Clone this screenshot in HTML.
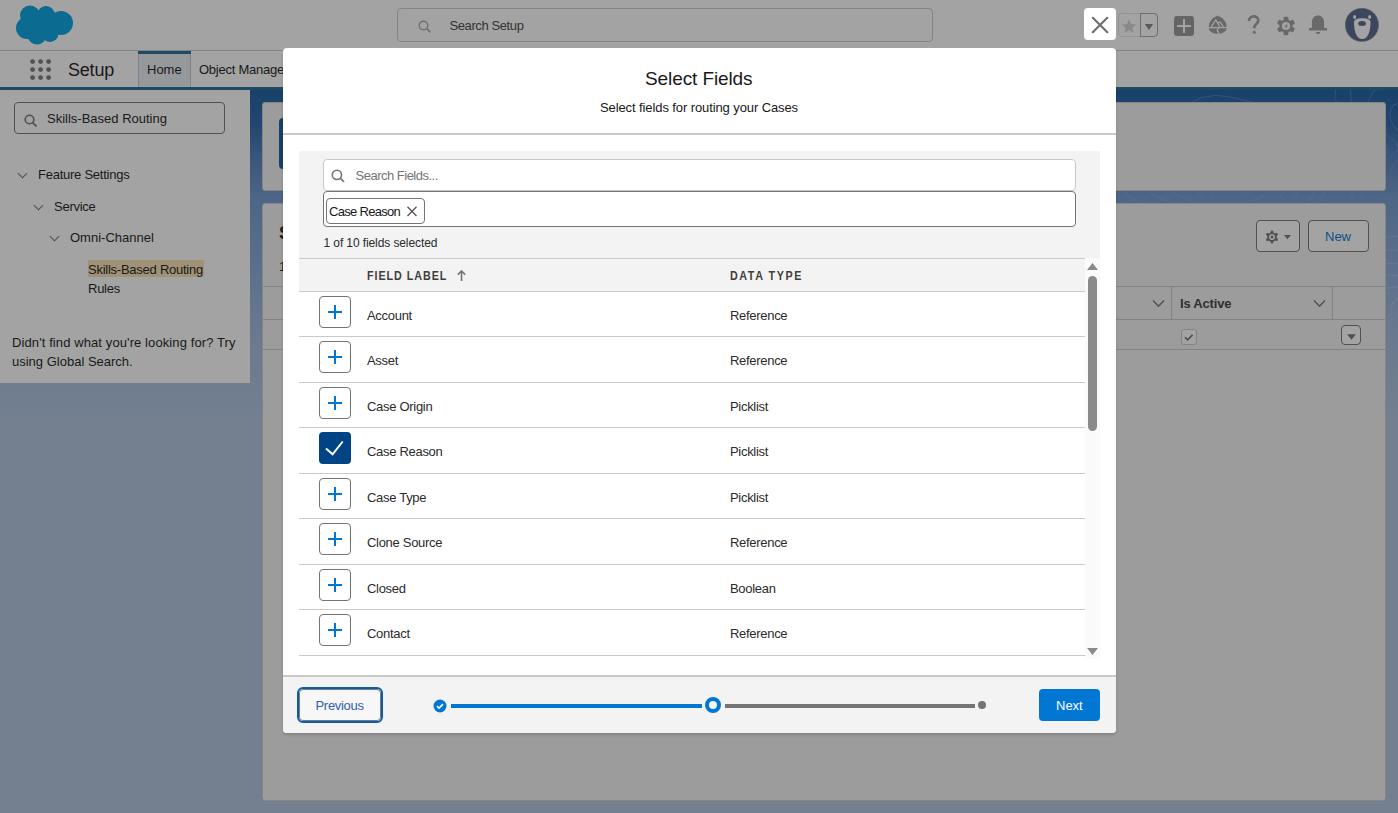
<!DOCTYPE html>
<html><head><meta charset="utf-8">
<style>
*{box-sizing:border-box;margin:0;padding:0}
html,body{width:1398px;height:813px;overflow:hidden;font-family:"Liberation Sans",sans-serif;color:#181818;background:#fff}
.a{position:absolute}
.t{position:absolute;white-space:nowrap;line-height:1}
#page{position:absolute;left:0;top:0;width:1398px;height:813px;background:linear-gradient(to bottom,#175b9e 90px,#2765a8 125px,#527fbd 160px,#6f98d0 197px,#84a7d8 260px,#9db8dd 330px,#b0c4df 420px,#b0c4df 813px)}
#topbar{left:0;top:0;width:1398px;height:51px;background:#fff;border-bottom:1px solid #c9c9c9}
#navbar{left:0;top:51px;width:1398px;height:39px;background:#fff;border-bottom:3px solid #206b95}
#sidebar{left:0;top:90px;width:250px;height:293px;background:#fff}
.card{background:#f3f3f3;border-radius:3px;border:1px solid #cfcfcf}
.sb{font-size:13px;letter-spacing:-0.25px}
#overlay{left:0;top:0;width:1398px;height:813px;background:rgba(27,27,27,0.404)}
#modal{left:283px;top:48px;width:833px;height:685px;background:#fff;border-radius:4px;box-shadow:0 2px 3px rgba(0,0,0,0.16)}
#closebtn{left:1084px;top:8px;width:32px;height:32px;background:#fff;border-radius:4px}
.rt{font-size:13px;letter-spacing:-0.3px;color:#2b2b2b}
.pbtn{left:319px;width:32px;height:32px;border:1px solid #747474;border-radius:4px;background:#fff}
.chev{position:absolute;width:7px;height:7px;border-right:1.3px solid #747474;border-bottom:1.3px solid #747474;transform:rotate(45deg)}
</style></head><body>
<div id="page">
  <div id="topbar" class="a">
    <svg class="a" style="left:16px;top:5px" width="58" height="41" viewBox="0 0 58 41"><g fill="#00a1e0"><circle cx="14" cy="10.5" r="10"/><circle cx="30" cy="10" r="9"/><circle cx="45" cy="18" r="12"/><circle cx="11" cy="23" r="11"/><circle cx="21" cy="30" r="9.5"/><circle cx="34" cy="28.5" r="8.5"/><circle cx="26" cy="19" r="12"/></g></svg>
    <div class="a" style="left:397px;top:8px;width:536px;height:34px;border:1px solid #c9c9c9;border-radius:4px"></div>
    <svg class="a" style="left:418px;top:20px" width="14" height="13" viewBox="0 0 14 13"><circle cx="5.5" cy="5.5" r="4.3" fill="none" stroke="#a8a8a8" stroke-width="1.5"/><line x1="8.6" y1="8.6" x2="12.5" y2="12.3" stroke="#a8a8a8" stroke-width="1.6"/></svg>
    <div class="t" style="left:449.5px;top:19px;font-size:13px;letter-spacing:-0.4px;color:#444">Search Setup</div>
    <!-- star group -->
    <div class="a" style="left:1118px;top:13px;width:40px;height:24px;border:1px solid #e5e5e5;border-radius:4px"></div>
    <div class="a" style="left:1140px;top:13px;width:18px;height:24px;border:1px solid #a8a8a8;border-radius:0 4px 4px 0"></div>
    <svg class="a" style="left:1121px;top:18px" width="16" height="16" viewBox="0 0 16 16"><path fill="#d4d4d4" d="M8 1.2l2.1 4.8 5.2.5-3.9 3.4 1.2 5.1L8 12.3 3.4 15l1.2-5.1L.7 6.5l5.2-.5z"/></svg>
    <svg class="a" style="left:1144px;top:24px" width="10" height="6" viewBox="0 0 10 6"><path fill="#858585" d="M.8 0h8.4L5 6z"/></svg>
    <!-- plus -->
    <div class="a" style="left:1174px;top:16px;width:20px;height:20px;background:#959595;border-radius:3px"></div>
    <div class="a" style="left:1177px;top:25px;width:14px;height:2px;background:#fff"></div>
    <div class="a" style="left:1183px;top:19px;width:2px;height:14px;background:#fff"></div>
    <!-- trailhead -->
    <svg class="a" style="left:1208px;top:15px" width="20" height="20" viewBox="0 0 20 20"><g fill="#9e9e9e"><path d="M9.6 .6Q1.2 4.2 .6 11.9H18.8Q18.2 4.2 9.6 .6z"/><path d="M.6 13.2H18.8Q18.4 17.6 9.6 19.1Q.9 17.6 .6 13.2z"/></g><g fill="none" stroke="#fff" stroke-width="1.2"><path d="M3.3 11.9L7.8 4.9 11.8 11.9"/><path d="M9.6 8.6L11.8 6.8 15.6 11.9"/><path d="M10.2 13.2L9.2 15.6 10.6 17.2 9.8 19.3"/></g></svg>
    <!-- ? -->
    <svg class="a" style="left:1247px;top:15px" width="14" height="20" viewBox="0 0 14 20"><path d="M1.9 5.9C1.9 3.1 4 1.4 6.6 1.4S11.3 3 11.3 5.6C11.3 8.6 7.3 9.2 7.3 12.1V13.2" fill="none" stroke="#9e9e9e" stroke-width="2.6"/><circle cx="7.3" cy="17.3" r="1.5" fill="#9e9e9e"/></svg>
    <!-- gear -->
    <svg class="a" style="left:1276px;top:16px" width="20" height="20" viewBox="0 0 20 20"><g fill="#9e9e9e"><circle cx="10" cy="10" r="6.6"/><g id="tooth"><rect x="7.6" y=".8" width="4.8" height="4.5" rx="1.3"/></g><rect x="7.6" y=".8" width="4.8" height="4.5" rx="1.3" transform="rotate(60 10 10)"/><rect x="7.6" y=".8" width="4.8" height="4.5" rx="1.3" transform="rotate(120 10 10)"/><rect x="7.6" y=".8" width="4.8" height="4.5" rx="1.3" transform="rotate(180 10 10)"/><rect x="7.6" y=".8" width="4.8" height="4.5" rx="1.3" transform="rotate(240 10 10)"/><rect x="7.6" y=".8" width="4.8" height="4.5" rx="1.3" transform="rotate(300 10 10)"/></g><circle cx="10" cy="10" r="4.1" fill="#fff"/><path d="M11.9 7.1L8.3 10.5H10.2L8.8 13.3 12.1 9.7H10.2z" fill="#9e9e9e"/></svg>
    <!-- bell -->
    <svg class="a" style="left:1308px;top:15px" width="20" height="20" viewBox="0 0 20 20"><g fill="#9e9e9e"><path d="M3.9 12.9V7.3C3.9 3.3 6.5.6 10 .6s6.1 2.7 6.1 6.7v5.6h2.9v2.5H1v-2.5z"/><path d="M7.8 17h4.5c0 1.3-1 2.1-2.25 2.1S7.8 18.3 7.8 17z"/></g></svg>
    <!-- avatar -->
    <svg class="a" style="left:1345px;top:8px" width="34" height="34" viewBox="0 0 34 34"><circle cx="16.9" cy="16.9" r="16.7" fill="#52668d" stroke="#9c8f86" stroke-width="0.5"/><path d="M9 14.3C9 11.4 12.2 10.2 17.2 10.2S25.5 11.4 25.5 14.3C25.5 22 23.5 31.1 17.2 31.1S9 22 9 14.3z" fill="#fff"/><ellipse cx="9.6" cy="9" rx="1.5" ry="1.9" fill="#fff"/><ellipse cx="24.6" cy="9" rx="1.5" ry="1.9" fill="#fff"/><ellipse cx="17.1" cy="15.4" rx="3.9" ry="2.5" fill="#52668d"/></svg>
  </div>
  <div id="navbar" class="a">
    <svg class="a" style="left:30px;top:8px" width="22" height="21" viewBox="0 0 22 21"><g fill="#747474"><circle cx="2.6" cy="2.6" r="2.4"/><circle cx="10.6" cy="2.6" r="2.4"/><circle cx="18.6" cy="2.6" r="2.4"/><circle cx="2.6" cy="10.6" r="2.4"/><circle cx="10.6" cy="10.6" r="2.4"/><circle cx="18.6" cy="10.6" r="2.4"/><circle cx="2.6" cy="18.6" r="2.4"/><circle cx="10.6" cy="18.6" r="2.4"/><circle cx="18.6" cy="18.6" r="2.4"/></g></svg>
    <div class="t" style="left:68px;top:9.5px;font-size:18px;letter-spacing:-0.2px;color:#181818">Setup</div>
    <div class="a" style="left:138px;top:0;width:53px;height:36px;background:#e9eef3;border-left:1px solid #c9c9c9;border-right:1px solid #c9c9c9"></div><div class="a" style="left:138px;top:0;width:53px;height:3px;background:#206b95"></div>
    <div class="t" style="left:147px;top:12px;font-size:13px;color:#181818">Home</div>
    <div class="t" style="left:199px;top:12px;font-size:13px;letter-spacing:-0.25px;color:#181818">Object Manager</div>
  </div>
  <svg class="a" style="left:250px;top:90px" width="1148" height="360" viewBox="0 0 1148 360"><defs><linearGradient id="fade" x1="0" y1="0" x2="0" y2="1"><stop offset="0" stop-color="#fff" stop-opacity="0.22"/><stop offset="0.7" stop-color="#fff" stop-opacity="0.08"/><stop offset="1" stop-color="#fff" stop-opacity="0"/></linearGradient></defs><g fill="none" stroke="url(#fade)" stroke-width="0.9"><path d="M314.8 150.0 L315.0 151.5 L314.3 153.0 L312.8 154.1 L310.8 154.8 L308.7 155.1 L306.9 155.3 L305.6 155.6 L304.6 156.2 L303.7 156.9 L302.6 157.5 L301.4 157.9 L300.0 158.0 L298.7 157.8 L297.3 157.6 L295.9 157.6 L294.1 157.9 L291.9 158.2 L289.4 158.2 L287.1 157.6 L285.6 156.4 L285.3 154.7 L286.2 152.8 L287.9 151.2 L289.8 150.0 L291.1 149.1 L291.5 148.2 L291.0 147.1 L290.2 145.6 L289.7 143.9 L290.1 142.4 L291.4 141.4 L293.3 141.1 L295.5 141.6 L297.3 142.3 L298.8 142.9 L300.0 143.1 L301.2 142.8 L302.7 142.2 L304.5 141.7 L306.3 141.6 L307.9 142.1 L309.1 143.0 L309.9 144.2 L310.6 145.3 L311.5 146.3 L312.6 147.4 L313.8 148.6Z"/><path d="M337.9 150.0 L338.1 153.9 L335.9 157.4 L331.6 160.1 L326.3 161.7 L321.2 162.5 L317.1 163.1 L314.1 164.1 L311.8 165.7 L309.5 167.7 L306.8 169.4 L303.5 170.5 L300.0 170.7 L296.5 170.4 L293.0 170.1 L289.0 170.4 L284.2 171.1 L278.3 171.7 L272.0 171.5 L266.6 169.7 L263.4 166.3 L263.3 161.7 L266.2 157.0 L270.8 153.0 L275.2 150.0 L277.9 147.8 L278.1 145.5 L276.3 142.4 L274.1 138.5 L273.1 134.1 L274.4 130.3 L278.2 128.1 L283.4 127.8 L288.8 129.1 L293.4 131.0 L297.0 132.3 L300.0 132.3 L303.2 131.1 L307.2 129.4 L311.8 128.1 L316.4 128.1 L320.4 129.5 L323.3 132.1 L325.4 135.0 L327.4 137.9 L329.7 140.5 L332.7 143.3 L335.8 146.4Z"/><path d="M353.7 150.0 L353.2 155.4 L349.4 160.2 L343.0 163.7 L335.5 165.8 L328.6 166.9 L323.4 168.0 L319.7 169.7 L316.7 172.3 L313.6 175.3 L309.7 177.9 L305.0 179.4 L300.0 179.8 L294.9 179.5 L289.8 179.4 L283.8 180.0 L276.6 181.1 L268.2 181.9 L259.5 181.1 L252.4 178.1 L248.8 172.7 L249.7 166.0 L254.3 159.4 L260.9 154.0 L266.6 150.0 L269.3 146.9 L268.6 143.5 L265.4 139.0 L262.1 133.2 L261.1 127.1 L263.7 122.1 L269.5 119.4 L277.1 119.5 L284.6 121.5 L290.9 123.9 L295.8 125.2 L300.0 124.6 L304.7 122.4 L310.5 119.7 L317.2 118.1 L323.7 118.4 L329.2 120.7 L333.2 124.4 L336.2 128.6 L339.1 132.7 L342.6 136.4 L347.0 140.3 L351.2 144.8Z"/><path d="M372.8 150.0 L371.3 157.2 L365.2 163.4 L356.1 167.9 L346.1 170.5 L337.4 172.1 L331.0 173.8 L326.6 176.7 L323.0 180.7 L318.9 185.1 L313.5 188.8 L307.0 190.9 L300.0 191.4 L292.9 191.3 L285.6 191.4 L277.1 192.5 L266.9 194.1 L255.3 194.8 L243.9 193.2 L235.2 188.2 L231.6 180.4 L234.0 171.0 L241.0 162.2 L249.6 155.1 L256.4 150.0 L258.7 145.8 L256.3 141.0 L251.3 134.5 L246.9 126.4 L246.2 118.2 L250.5 111.9 L259.1 109.0 L269.7 109.6 L279.8 112.5 L287.9 115.3 L294.2 116.3 L300.0 114.6 L306.7 111.0 L314.9 107.2 L324.1 105.2 L333.0 106.1 L340.2 109.7 L345.5 115.0 L349.5 120.8 L353.6 126.2 L358.8 131.3 L364.8 136.7 L370.1 142.9Z"/><path d="M394.3 150.0 L391.1 159.2 L382.3 167.0 L370.1 172.3 L357.4 175.5 L346.9 177.7 L339.7 180.5 L334.8 184.9 L330.6 190.8 L325.3 196.9 L318.0 201.8 L309.3 204.5 L300.0 205.3 L290.5 205.4 L280.5 206.0 L268.9 207.7 L255.2 209.7 L240.0 210.1 L225.8 207.0 L215.9 199.6 L212.9 188.7 L217.3 176.3 L227.1 165.0 L237.8 156.3 L245.1 150.0 L246.1 144.5 L241.4 137.9 L234.0 129.0 L228.6 118.3 L228.7 107.9 L235.5 100.4 L247.6 97.5 L261.6 98.8 L274.4 102.5 L284.5 105.6 L292.4 105.8 L300.0 102.5 L309.0 97.1 L320.2 92.1 L332.4 89.9 L343.8 91.7 L352.9 97.0 L359.6 104.2 L364.9 111.7 L370.6 118.7 L377.6 125.3 L385.4 132.4 L391.9 140.7Z"/><path d="M415.7 150.0 L410.2 161.2 L398.3 170.3 L383.0 176.4 L368.0 180.2 L356.3 183.2 L348.7 187.4 L343.6 193.8 L338.8 201.7 L332.2 209.7 L322.9 215.8 L311.8 219.2 L300.0 220.3 L287.9 220.7 L275.0 221.9 L260.0 224.3 L242.6 226.5 L224.0 226.2 L207.5 221.2 L196.9 210.9 L195.2 196.6 L202.2 181.2 L214.6 167.6 L226.9 157.4 L233.7 150.0 L232.6 143.2 L224.9 134.5 L215.1 123.0 L209.0 109.6 L210.5 97.2 L220.5 88.8 L236.3 86.2 L253.8 88.5 L269.2 92.8 L281.1 95.6 L290.5 94.5 L300.0 89.2 L311.7 81.8 L325.9 75.7 L341.1 73.6 L355.1 76.6 L366.0 83.8 L374.0 93.1 L380.7 102.4 L388.1 110.9 L397.1 119.0 L406.7 128.0 L413.9 138.5Z"/><path d="M425.7 150.0 L418.2 162.0 L404.2 171.5 L387.4 177.9 L371.9 182.0 L360.6 185.8 L353.6 191.2 L349.0 199.2 L344.0 208.7 L336.5 217.8 L326.0 224.6 L313.4 228.2 L300.0 229.5 L286.3 230.3 L271.4 232.0 L254.4 234.8 L234.9 236.8 L214.8 235.4 L197.8 228.6 L188.2 216.0 L188.4 199.6 L197.5 182.6 L211.2 168.3 L223.2 157.8 L228.2 150.0 L224.3 142.3 L214.0 132.3 L202.9 119.1 L197.1 104.3 L200.5 91.2 L213.1 83.1 L231.4 81.2 L250.6 84.2 L266.9 88.5 L279.2 90.4 L289.3 87.5 L300.0 80.4 L313.4 71.7 L329.5 65.2 L346.4 63.8 L361.5 68.1 L373.1 76.7 L381.7 87.2 L389.2 97.4 L397.8 106.6 L408.0 115.6 L418.2 125.6 L425.2 137.3Z"/><path d="M431.8 120.0 L430.9 121.1 L430.9 122.3 L431.8 123.8 L432.7 125.6 L433.0 127.7 L432.1 129.3 L430.2 130.3 L427.7 130.3 L425.2 129.7 L423.1 128.9 L421.5 128.6 L420.0 128.9 L418.4 129.6 L416.4 130.2 L414.4 130.4 L412.8 129.6 L411.8 128.2 L411.6 126.4 L411.7 124.9 L411.4 123.8 L409.9 123.2 L407.2 122.6 L403.8 121.6 L400.7 120.0 L399.0 117.9 L399.2 115.7 L401.4 114.1 L405.0 113.3 L408.8 113.4 L412.1 113.9 L414.3 114.2 L415.5 114.1 L416.4 113.3 L417.3 112.1 L418.5 111.1 L420.0 110.4 L421.7 110.3 L423.3 110.5 L425.0 110.7 L426.9 110.8 L429.2 110.8 L431.6 111.0 L433.9 111.8 L435.5 113.1 L435.8 115.0 L435.0 116.9 L433.4 118.6Z"/><path d="M443.3 120.0 L442.0 122.2 L442.7 124.7 L444.8 127.9 L446.6 131.8 L446.9 135.9 L444.7 139.0 L440.5 140.5 L435.3 140.3 L430.2 139.0 L426.2 137.7 L423.0 137.3 L420.0 138.2 L416.6 139.8 L412.6 141.2 L408.6 141.2 L405.4 139.5 L403.7 136.4 L403.3 132.9 L403.1 129.9 L401.8 128.1 L398.2 127.0 L392.2 125.7 L385.3 123.5 L379.4 120.0 L376.7 115.6 L378.3 111.4 L383.7 108.4 L391.3 107.2 L399.0 107.6 L405.1 108.5 L409.0 108.9 L411.1 108.1 L412.5 106.1 L414.3 103.6 L416.8 101.4 L420.0 100.1 L423.5 99.8 L426.9 100.1 L430.5 100.5 L434.6 100.6 L439.3 100.7 L444.2 101.3 L448.6 103.1 L451.3 106.1 L451.5 110.0 L449.5 113.9 L446.2 117.3Z"/><path d="M455.0 120.0 L453.9 123.4 L455.9 127.4 L459.4 132.5 L462.1 138.7 L461.9 144.7 L457.9 149.2 L450.9 151.0 L442.7 150.3 L435.2 148.2 L429.2 146.5 L424.5 146.5 L420.0 148.3 L414.7 151.1 L408.5 153.1 L402.4 152.8 L397.7 149.7 L395.2 144.8 L394.5 139.6 L393.8 135.5 L390.8 133.0 L384.2 131.4 L374.5 129.4 L363.8 125.7 L355.7 120.0 L353.1 113.2 L357.1 107.0 L366.5 103.0 L378.7 101.6 L390.2 102.4 L398.8 103.7 L403.8 103.8 L406.4 101.9 L408.2 98.2 L410.9 93.9 L414.9 90.4 L420.0 88.5 L425.5 88.2 L430.9 88.6 L436.7 89.0 L443.2 89.1 L450.5 89.4 L458.1 90.7 L464.3 93.8 L467.7 98.8 L467.4 104.9 L463.8 111.0 L458.9 116.1Z"/><path d="M467.7 120.0 L467.5 124.8 L471.2 130.6 L476.5 138.0 L479.9 146.6 L478.7 154.6 L472.2 160.2 L461.9 162.0 L450.5 160.6 L440.4 157.8 L432.5 156.0 L426.3 156.8 L420.0 160.0 L412.4 164.1 L403.8 166.6 L395.4 165.6 L389.3 160.9 L386.1 154.0 L384.9 147.0 L383.0 141.8 L377.6 138.8 L367.2 136.8 L353.0 133.8 L338.7 128.2 L329.0 120.0 L327.5 110.6 L335.1 102.5 L349.7 97.6 L366.8 96.4 L382.0 97.6 L392.6 98.9 L398.3 98.3 L401.0 94.6 L403.2 88.8 L406.9 82.4 L412.7 77.6 L420.0 75.1 L427.8 74.7 L435.6 75.3 L443.8 75.7 L453.1 75.9 L463.4 76.5 L473.6 78.7 L481.6 83.6 L485.3 91.0 L483.9 99.6 L478.5 107.9 L472.0 114.7Z"/><path d="M482.1 120.0 L483.5 126.4 L489.7 134.4 L496.9 144.5 L500.7 155.8 L497.8 165.9 L488.1 172.4 L473.8 174.0 L458.8 171.7 L446.0 168.3 L436.3 166.8 L428.4 168.9 L420.0 174.0 L409.8 179.5 L398.3 182.3 L387.5 180.3 L379.8 173.6 L375.8 164.3 L373.7 155.6 L370.0 149.5 L361.1 146.1 L346.0 143.6 L326.8 139.2 L308.9 131.3 L298.4 120.0 L299.4 107.8 L312.1 97.8 L332.8 92.2 L355.3 91.3 L374.1 92.9 L386.2 94.0 L392.0 91.9 L394.4 85.8 L396.9 77.1 L402.0 68.4 L410.1 62.1 L420.0 59.1 L430.5 58.7 L441.1 59.4 L452.3 60.0 L464.9 60.2 L478.5 61.3 L491.5 65.0 L501.0 72.2 L504.5 82.5 L501.6 94.0 L494.2 104.7 L486.4 113.3Z"/><path d="M489.8 120.0 L493.3 127.4 L501.4 136.8 L509.6 148.6 L512.9 161.2 L508.1 172.0 L495.8 178.3 L479.1 179.2 L462.3 176.4 L448.5 173.0 L438.2 172.4 L429.6 175.9 L420.0 182.5 L408.2 188.8 L395.1 191.4 L383.2 188.3 L374.9 180.1 L370.5 169.7 L367.4 160.4 L361.8 154.4 L349.9 151.1 L331.4 148.2 L309.6 142.8 L290.9 133.1 L281.8 120.0 L286.3 106.5 L303.4 96.0 L328.0 90.7 L353.0 90.2 L372.5 91.9 L383.8 92.2 L388.4 88.3 L390.0 80.1 L392.7 69.3 L398.8 59.2 L408.4 52.2 L420.0 49.2 L432.2 49.0 L444.5 49.8 L457.5 50.3 L472.0 50.7 L487.4 52.5 L501.3 57.4 L510.8 66.4 L513.4 78.5 L509.0 91.6 L500.6 103.4 L492.8 112.6Z"/><path d="M504.0 120.0 L510.4 129.2 L521.3 140.9 L530.9 155.3 L533.4 170.4 L525.8 182.4 L509.5 188.8 L488.8 189.0 L469.1 185.4 L453.5 182.2 L441.9 182.9 L431.7 188.6 L420.0 197.2 L405.5 204.7 L389.7 206.9 L375.8 202.1 L366.2 191.7 L360.8 179.4 L356.2 169.1 L347.5 162.8 L331.1 159.5 L307.5 155.8 L281.6 148.5 L261.3 136.1 L254.1 120.0 L263.4 104.1 L286.9 92.6 L317.4 87.3 L346.4 87.3 L367.3 88.9 L378.2 87.8 L381.5 81.4 L382.3 69.8 L385.5 56.0 L393.4 43.7 L405.6 35.7 L420.0 32.5 L435.0 32.5 L450.1 33.5 L466.3 34.1 L483.9 34.8 L502.2 37.6 L518.0 44.6 L527.9 56.3 L529.4 71.4 L523.2 87.1 L513.3 100.8 L505.4 111.4Z"/><path d="M1214.0 60.0 L1213.1 61.3 L1211.8 62.4 L1210.4 63.3 L1209.1 64.1 L1208.3 64.9 L1207.9 66.1 L1207.7 67.8 L1207.3 69.7 L1206.3 71.7 L1204.5 73.1 L1202.3 73.5 L1200.0 73.1 L1198.0 71.9 L1196.4 70.4 L1195.0 69.3 L1193.5 68.7 L1191.6 68.4 L1189.3 68.2 L1187.0 67.7 L1185.4 66.5 L1184.9 64.8 L1185.8 62.9 L1187.7 61.2 L1189.8 60.0 L1191.1 59.1 L1191.3 58.2 L1190.3 56.9 L1188.7 55.0 L1187.6 52.7 L1187.4 50.3 L1188.6 48.6 L1190.9 47.9 L1193.6 48.2 L1196.2 49.2 L1198.4 50.4 L1200.0 51.2 L1201.5 51.4 L1203.1 51.0 L1205.2 50.4 L1207.5 50.1 L1209.7 50.3 L1211.6 51.1 L1213.0 52.3 L1213.9 53.8 L1214.3 55.4 L1214.5 57.0 L1214.4 58.5Z"/><path d="M1230.7 60.0 L1228.7 62.9 L1225.9 65.3 L1223.0 67.3 L1220.6 69.1 L1219.2 71.3 L1218.6 74.3 L1218.3 78.3 L1217.1 82.8 L1214.6 87.0 L1210.4 89.8 L1205.2 90.5 L1200.0 89.0 L1195.5 86.1 L1192.0 83.0 L1188.9 80.7 L1185.3 79.5 L1180.8 79.2 L1175.6 78.8 L1170.6 77.3 L1167.4 74.5 L1167.0 70.5 L1169.4 66.3 L1173.7 62.7 L1177.9 60.0 L1180.1 58.0 L1179.6 55.8 L1176.7 52.6 L1173.1 48.1 L1170.7 42.7 L1171.0 37.7 L1174.3 34.2 L1179.8 33.1 L1186.1 34.2 L1191.9 36.6 L1196.4 39.1 L1200.0 40.5 L1203.4 40.4 L1207.3 39.2 L1212.0 37.8 L1217.2 37.1 L1222.2 37.8 L1226.3 39.8 L1229.1 42.8 L1230.9 46.3 L1231.8 49.9 L1232.1 53.4 L1231.8 56.8Z"/><path d="M1243.6 60.0 L1240.8 64.1 L1237.0 67.6 L1233.1 70.6 L1230.2 73.4 L1228.7 77.0 L1228.3 81.8 L1227.8 87.9 L1226.0 94.6 L1221.8 100.4 L1215.3 103.9 L1207.6 104.1 L1200.0 101.4 L1193.7 97.1 L1188.6 92.7 L1183.9 89.8 L1178.5 88.6 L1171.7 88.4 L1164.0 87.7 L1157.2 85.3 L1153.2 80.8 L1153.3 74.9 L1157.4 68.8 L1163.5 63.7 L1168.8 60.0 L1170.9 57.1 L1168.9 53.6 L1163.9 48.5 L1158.5 41.6 L1155.5 33.8 L1156.8 26.8 L1162.5 22.4 L1171.1 21.5 L1180.4 23.7 L1188.6 27.3 L1194.9 30.5 L1200.0 31.8 L1205.0 31.0 L1210.9 28.8 L1217.9 26.7 L1225.6 25.9 L1232.7 27.2 L1238.3 30.5 L1242.2 35.1 L1244.4 40.3 L1245.5 45.5 L1245.8 50.6 L1245.3 55.4Z"/><path d="M1255.9 60.0 L1252.2 65.3 L1247.6 69.8 L1243.2 73.8 L1240.2 77.9 L1238.9 83.0 L1238.8 89.8 L1238.1 98.2 L1235.2 106.9 L1229.1 114.0 L1220.1 117.7 L1209.8 117.2 L1200.0 113.1 L1191.9 107.3 L1185.4 102.0 L1179.1 98.8 L1171.7 97.7 L1162.5 97.6 L1152.5 96.6 L1144.1 93.0 L1139.8 86.7 L1140.9 78.8 L1146.7 71.0 L1154.4 64.6 L1160.1 60.0 L1161.2 56.1 L1157.1 51.2 L1149.7 44.0 L1142.7 34.6 L1139.7 24.4 L1142.6 15.9 L1151.2 11.1 L1163.1 10.8 L1175.3 14.1 L1185.6 18.8 L1193.6 22.3 L1200.0 23.2 L1206.6 21.3 L1214.6 18.0 L1224.1 15.2 L1234.2 14.5 L1243.2 16.7 L1250.1 21.4 L1254.7 27.7 L1257.2 34.6 L1258.5 41.4 L1258.8 47.9 L1258.0 54.1Z"/><path d="M1272.1 60.0 L1267.5 66.8 L1262.1 72.8 L1257.2 78.2 L1254.2 84.1 L1253.4 91.5 L1253.6 101.2 L1252.5 112.6 L1248.0 123.9 L1239.0 132.5 L1226.5 136.2 L1212.7 134.4 L1200.0 128.3 L1189.6 120.6 L1181.1 114.3 L1172.6 110.9 L1162.3 110.2 L1149.8 110.3 L1136.9 108.6 L1126.6 103.3 L1122.2 94.6 L1124.8 84.0 L1132.8 73.8 L1142.1 65.9 L1148.0 60.0 L1147.3 54.7 L1140.0 47.6 L1129.5 37.5 L1120.6 24.8 L1118.0 11.6 L1123.6 1.2 L1136.3 -3.8 L1152.6 -3.1 L1168.6 1.8 L1181.8 7.6 L1191.7 11.4 L1200.0 11.3 L1208.9 7.8 L1219.9 2.9 L1232.7 -0.7 L1245.8 -1.0 L1257.3 2.5 L1265.8 9.4 L1271.2 18.0 L1274.2 27.1 L1275.6 35.9 L1275.9 44.4 L1274.9 52.4Z"/><path d="M1283.8 60.0 L1278.8 68.0 L1273.1 75.1 L1268.4 81.8 L1266.0 89.3 L1265.9 98.9 L1266.4 111.1 L1264.7 124.8 L1258.3 137.7 L1246.7 146.8 L1231.3 149.8 L1214.8 146.5 L1200.0 138.7 L1188.1 129.8 L1178.0 123.1 L1167.6 120.1 L1154.9 120.1 L1139.9 120.3 L1124.9 117.8 L1113.8 110.9 L1110.0 100.0 L1114.3 87.3 L1123.9 75.7 L1133.7 66.7 L1138.4 60.0 L1135.0 53.4 L1124.4 44.4 L1111.4 31.8 L1101.7 16.4 L1100.5 1.3 L1109.2 -9.8 L1125.8 -14.4 L1145.7 -12.4 L1164.3 -6.2 L1179.2 0.2 L1190.3 3.4 L1200.0 1.8 L1210.9 -3.4 L1224.3 -9.7 L1239.7 -13.7 L1255.0 -13.3 L1268.0 -8.2 L1277.4 0.5 L1283.1 11.0 L1286.1 21.7 L1287.7 32.1 L1288.0 41.9 L1286.9 51.2Z"/><path d="M1292.7 60.0 L1287.7 68.9 L1282.2 76.9 L1278.2 84.9 L1276.8 94.1 L1277.5 105.7 L1278.1 120.1 L1275.4 135.6 L1267.2 149.5 L1253.0 158.4 L1234.9 160.2 L1216.3 155.2 L1200.0 146.0 L1186.9 136.4 L1175.6 130.0 L1163.5 127.8 L1148.7 128.4 L1131.5 128.6 L1115.2 125.2 L1104.1 116.6 L1101.4 103.8 L1107.1 89.6 L1117.7 77.0 L1127.1 67.4 L1129.7 60.0 L1123.1 52.2 L1109.4 41.3 L1094.4 26.4 L1085.0 8.9 L1085.9 -7.4 L1098.0 -18.4 L1118.2 -22.0 L1141.0 -18.6 L1161.5 -11.5 L1177.3 -5.1 L1189.2 -3.1 L1200.0 -6.5 L1212.6 -13.5 L1228.1 -20.8 L1245.6 -24.8 L1262.6 -23.4 L1276.5 -16.7 L1286.2 -6.3 L1291.9 5.7 L1295.0 17.8 L1296.6 29.2 L1297.1 40.0 L1296.0 50.3Z"/><path d="M1342.1 160.0 L1341.7 161.2 L1342.4 162.5 L1343.3 164.2 L1343.8 166.1 L1343.4 167.9 L1342.0 169.2 L1340.0 170.0 L1338.0 170.6 L1336.1 171.4 L1334.4 172.7 L1332.5 174.4 L1330.0 176.3 L1327.0 177.6 L1323.8 177.8 L1321.1 176.6 L1319.3 174.2 L1318.8 171.3 L1319.0 168.4 L1319.4 166.2 L1319.2 164.8 L1317.9 163.9 L1315.7 162.9 L1313.2 161.7 L1311.2 160.0 L1310.3 158.0 L1310.6 156.0 L1312.0 154.3 L1313.9 152.9 L1316.0 151.7 L1318.0 150.8 L1319.9 149.9 L1321.9 149.2 L1323.9 148.8 L1326.1 148.7 L1328.1 148.8 L1330.0 148.9 L1331.9 148.7 L1334.2 147.9 L1337.1 146.8 L1340.6 145.9 L1344.4 145.6 L1347.7 146.4 L1349.7 148.4 L1350.0 151.1 L1348.6 154.1 L1346.2 156.7 L1343.7 158.6Z"/><path d="M1348.8 160.0 L1348.9 161.9 L1350.4 164.2 L1352.1 167.0 L1352.9 170.2 L1352.0 173.0 L1349.6 175.1 L1346.4 176.4 L1343.1 177.5 L1340.2 178.9 L1337.4 181.2 L1334.1 184.2 L1330.0 187.1 L1325.1 188.8 L1320.0 188.6 L1315.9 186.2 L1313.4 182.1 L1312.8 177.3 L1313.2 172.9 L1313.5 169.7 L1312.6 167.7 L1310.0 166.4 L1306.1 164.9 L1302.0 162.8 L1298.9 160.0 L1297.7 156.7 L1298.7 153.5 L1301.1 150.8 L1304.4 148.6 L1307.7 146.9 L1310.9 145.3 L1313.9 143.8 L1317.0 142.7 L1320.3 141.9 L1323.6 141.7 L1326.9 141.8 L1330.0 141.7 L1333.3 141.0 L1337.1 139.5 L1342.0 137.7 L1347.8 136.3 L1353.7 136.2 L1358.6 138.0 L1361.3 141.6 L1361.1 146.2 L1358.4 151.0 L1354.4 155.0 L1350.8 157.9Z"/><path d="M1360.0 160.0 L1361.1 163.2 L1364.3 167.1 L1367.4 171.9 L1368.5 177.1 L1366.7 181.7 L1362.5 185.0 L1357.2 187.3 L1351.9 189.2 L1347.2 192.0 L1342.5 196.0 L1337.0 200.9 L1330.0 205.4 L1321.8 207.7 L1313.8 206.5 L1307.5 201.8 L1304.0 194.6 L1303.3 186.8 L1303.9 180.1 L1303.9 175.4 L1301.5 172.7 L1296.3 170.7 L1289.4 168.4 L1282.6 164.8 L1277.9 160.0 L1276.7 154.6 L1278.8 149.4 L1283.2 145.1 L1288.7 141.6 L1294.0 138.8 L1299.0 136.2 L1303.8 133.7 L1308.8 131.7 L1314.1 130.5 L1319.5 130.0 L1324.8 129.8 L1330.0 129.2 L1335.5 127.6 L1342.2 124.9 L1350.5 122.0 L1360.0 120.0 L1369.4 120.5 L1376.6 124.1 L1379.9 130.5 L1378.7 138.4 L1373.7 146.1 L1367.3 152.3 L1362.1 156.7Z"/><path d="M1367.1 160.0 L1369.8 164.0 L1374.6 169.2 L1378.7 175.5 L1379.8 182.1 L1377.1 187.8 L1371.5 191.9 L1364.7 194.8 L1358.2 197.5 L1352.3 201.4 L1346.3 206.8 L1339.1 213.0 L1330.0 218.1 L1319.7 220.1 L1309.9 217.6 L1302.6 210.9 L1298.9 201.5 L1298.2 191.8 L1298.7 184.0 L1297.9 179.0 L1293.8 176.1 L1286.3 173.9 L1277.0 170.9 L1268.5 166.2 L1263.3 160.0 L1262.6 153.2 L1265.9 146.8 L1272.0 141.5 L1278.8 137.3 L1285.4 133.7 L1291.4 130.3 L1297.3 127.2 L1303.4 124.6 L1310.0 122.9 L1316.8 122.0 L1323.4 121.4 L1330.0 120.2 L1337.2 117.7 L1346.0 114.0 L1356.7 110.3 L1368.7 108.5 L1379.9 109.9 L1388.0 115.4 L1390.8 124.1 L1388.1 134.2 L1381.4 143.6 L1373.8 151.0 L1368.4 156.1Z"/><path d="M1379.8 160.0 L1385.2 165.6 L1392.5 172.9 L1398.0 181.7 L1398.9 190.6 L1394.6 198.1 L1386.6 203.5 L1377.4 207.5 L1368.7 211.6 L1360.9 217.3 L1352.6 225.0 L1342.5 233.2 L1330.0 239.4 L1316.2 240.8 L1303.5 236.1 L1294.5 226.0 L1290.2 213.0 L1289.6 200.5 L1289.7 191.0 L1287.2 185.2 L1280.2 182.1 L1268.9 179.5 L1255.8 175.3 L1244.8 168.6 L1238.7 160.0 L1238.9 150.8 L1244.4 142.4 L1252.9 135.4 L1262.2 129.9 L1270.8 125.0 L1278.5 120.4 L1286.1 116.0 L1294.2 112.3 L1303.0 109.8 L1312.0 108.3 L1320.9 107.0 L1330.0 104.7 L1340.2 100.7 L1352.5 95.5 L1367.2 90.9 L1383.1 89.2 L1397.4 92.5 L1406.7 101.0 L1408.9 113.4 L1404.0 127.1 L1394.6 139.4 L1385.1 148.6 L1379.5 155.0Z"/><path d="M1390.5 160.0 L1398.9 167.0 L1408.6 176.2 L1415.0 187.1 L1415.2 197.8 L1409.2 206.7 L1399.1 213.1 L1387.9 218.1 L1377.7 223.5 L1368.2 231.0 L1358.1 240.5 L1345.4 250.1 L1330.0 256.4 L1313.5 256.5 L1298.9 249.3 L1289.0 236.1 L1284.6 220.4 L1283.9 206.2 L1283.2 196.0 L1278.6 190.3 L1268.3 187.4 L1253.3 184.4 L1237.3 179.1 L1224.6 170.7 L1218.6 160.0 L1220.3 148.9 L1227.9 139.0 L1238.6 130.9 L1249.6 124.3 L1259.5 118.4 L1268.4 112.6 L1277.2 107.1 L1286.8 102.5 L1297.3 99.2 L1308.1 97.0 L1318.8 94.8 L1330.0 91.2 L1342.7 85.8 L1358.1 79.4 L1376.1 74.4 L1394.8 73.6 L1410.8 79.0 L1420.2 90.6 L1420.9 106.3 L1413.7 122.8 L1402.5 136.9 L1392.3 147.2 L1387.8 154.2Z"/><path d="M1401.0 160.0 L1412.4 168.3 L1424.1 179.4 L1431.0 192.2 L1430.2 204.5 L1422.2 214.4 L1410.2 221.7 L1397.4 227.5 L1385.8 234.3 L1375.0 243.5 L1363.0 254.6 L1348.0 265.0 L1330.0 270.8 L1311.3 269.1 L1295.5 259.1 L1285.2 243.2 L1280.9 225.4 L1279.9 210.2 L1277.8 200.2 L1270.6 195.1 L1256.8 192.5 L1238.4 189.2 L1219.9 182.7 L1206.3 172.5 L1201.2 160.0 L1204.7 147.3 L1214.5 136.2 L1227.0 127.2 L1239.3 119.7 L1250.0 112.8 L1259.7 105.9 L1269.5 99.3 L1280.3 93.8 L1292.2 89.7 L1304.5 86.7 L1316.9 83.4 L1330.0 78.5 L1345.1 71.7 L1363.3 64.5 L1384.0 59.6 L1404.9 60.3 L1421.6 68.2 L1430.2 82.9 L1429.0 101.5 L1419.8 120.1 L1407.2 135.4 L1397.5 146.1 L1395.0 153.4Z"/><path d="M1401.1 300.0 L1400.1 301.0 L1400.8 302.2 L1402.6 304.0 L1404.5 306.5 L1405.5 309.1 L1404.8 311.4 L1402.5 312.6 L1399.3 312.4 L1396.1 311.4 L1393.5 310.1 L1391.6 309.5 L1390.0 309.9 L1388.1 311.3 L1385.5 312.8 L1382.6 313.7 L1380.0 313.4 L1378.3 311.7 L1378.1 309.2 L1379.0 306.5 L1380.5 304.2 L1381.5 302.7 L1381.5 301.7 L1380.4 301.0 L1378.5 300.0 L1376.5 298.6 L1375.1 296.9 L1374.5 295.1 L1374.7 293.2 L1375.5 291.4 L1376.5 289.7 L1378.0 287.9 L1379.8 286.4 L1382.2 285.5 L1384.9 285.4 L1387.7 286.5 L1390.0 288.3 L1391.6 290.5 L1392.7 292.3 L1393.7 293.1 L1395.3 292.9 L1397.9 292.1 L1401.1 291.5 L1404.2 291.6 L1406.3 292.7 L1406.8 294.7 L1405.5 296.8 L1403.2 298.7Z"/><path d="M1412.8 300.0 L1411.7 302.2 L1414.0 304.9 L1418.2 309.0 L1422.2 314.3 L1423.7 319.9 L1421.5 324.2 L1416.1 326.1 L1409.1 325.4 L1402.4 323.0 L1397.2 320.6 L1393.4 319.9 L1390.0 321.3 L1385.8 324.5 L1380.4 327.6 L1374.3 329.1 L1369.1 327.8 L1366.2 323.9 L1366.1 318.4 L1368.3 312.8 L1371.1 308.4 L1372.7 305.5 L1371.9 303.7 L1368.7 302.2 L1364.1 300.0 L1359.8 296.9 L1357.0 293.2 L1356.0 289.2 L1356.8 285.3 L1358.6 281.5 L1361.2 277.8 L1364.4 274.3 L1368.6 271.4 L1373.8 269.9 L1379.6 270.3 L1385.4 272.8 L1390.0 276.9 L1393.2 281.2 L1395.5 284.3 L1397.9 285.4 L1401.7 284.4 L1407.4 282.6 L1414.3 281.3 L1420.6 281.9 L1424.5 284.7 L1424.7 289.0 L1421.5 293.5 L1416.7 297.3Z"/><path d="M1420.1 300.0 L1419.9 303.0 L1423.9 307.0 L1430.0 312.7 L1435.0 320.0 L1436.1 327.2 L1432.1 332.4 L1424.1 334.2 L1414.6 332.7 L1405.9 329.5 L1399.3 326.7 L1394.5 326.4 L1390.0 329.1 L1384.2 333.6 L1376.9 337.7 L1369.0 339.0 L1362.6 336.6 L1359.4 330.7 L1359.9 323.1 L1363.0 315.9 L1366.3 310.5 L1367.4 307.2 L1365.1 305.1 L1359.8 303.1 L1353.2 300.0 L1347.4 295.7 L1343.9 290.5 L1343.1 285.1 L1344.6 279.8 L1347.4 274.9 L1351.1 270.1 L1355.7 265.6 L1361.6 262.2 L1368.8 260.7 L1376.7 261.8 L1384.1 265.6 L1390.0 271.1 L1394.0 276.4 L1397.0 279.8 L1400.6 280.2 L1406.3 278.3 L1414.4 275.6 L1423.6 274.1 L1431.6 275.4 L1435.9 279.6 L1435.2 285.6 L1430.5 291.7 L1424.4 296.5Z"/><path d="M1434.2 300.0 L1435.7 304.6 L1443.0 310.9 L1452.4 319.9 L1459.1 330.7 L1459.2 340.9 L1451.9 347.6 L1439.1 349.3 L1424.8 346.4 L1412.4 341.6 L1403.4 338.4 L1396.7 339.1 L1390.0 344.0 L1381.3 351.0 L1370.3 356.5 L1359.0 357.5 L1350.4 352.8 L1346.7 343.4 L1348.2 332.1 L1352.7 322.0 L1356.6 314.8 L1356.7 310.6 L1351.6 307.9 L1342.5 304.8 L1332.2 300.0 L1323.7 293.3 L1319.2 285.4 L1318.8 277.3 L1321.6 269.6 L1326.3 262.4 L1332.3 255.6 L1339.6 249.5 L1348.7 245.0 L1359.6 243.6 L1371.2 246.1 L1381.8 252.2 L1390.0 260.1 L1395.6 267.1 L1400.2 270.7 L1406.1 270.1 L1415.2 266.4 L1427.7 262.2 L1441.2 260.6 L1452.2 263.3 L1457.1 270.2 L1454.9 279.3 L1447.5 288.2 L1439.0 295.0Z"/><path d="M1445.0 300.0 L1449.1 306.0 L1459.5 314.3 L1471.3 325.9 L1478.4 339.3 L1476.7 351.2 L1465.8 358.3 L1449.0 359.1 L1431.3 355.0 L1416.6 349.4 L1406.2 346.4 L1398.3 348.7 L1390.0 355.9 L1378.9 364.7 L1365.3 370.8 L1351.9 370.8 L1342.3 363.5 L1339.0 351.2 L1341.5 337.3 L1346.7 325.5 L1350.1 317.7 L1348.2 313.3 L1339.8 310.3 L1327.1 306.4 L1313.9 300.0 L1303.9 291.3 L1299.2 281.3 L1299.8 271.2 L1304.1 261.8 L1310.6 253.1 L1318.5 245.0 L1328.1 238.0 L1339.9 233.3 L1353.7 232.5 L1367.9 236.5 L1380.5 244.4 L1390.0 253.7 L1396.6 261.2 L1402.5 264.0 L1410.6 261.7 L1422.9 256.2 L1438.8 251.0 L1455.3 249.8 L1467.6 254.2 L1472.1 263.5 L1468.0 275.1 L1458.5 285.9 L1449.0 294.0Z"/><path d="M1458.9 300.0 L1466.4 307.7 L1480.7 318.7 L1494.9 333.4 L1501.9 349.7 L1497.3 363.3 L1481.8 370.6 L1460.1 370.3 L1438.5 364.6 L1421.4 358.3 L1409.6 356.2 L1400.4 360.8 L1390.0 370.7 L1376.0 381.6 L1359.3 388.0 L1343.6 386.2 L1333.1 375.8 L1330.3 359.9 L1333.9 343.1 L1339.7 329.7 L1341.9 321.4 L1336.9 316.9 L1324.2 313.6 L1307.1 308.4 L1290.6 300.0 L1279.1 288.8 L1274.6 276.2 L1276.7 263.9 L1283.1 252.5 L1291.9 242.1 L1302.3 232.6 L1314.8 224.6 L1329.9 219.9 L1347.0 220.1 L1364.2 225.9 L1379.0 235.7 L1390.0 246.4 L1397.9 253.9 L1405.6 255.3 L1416.5 250.8 L1432.7 243.1 L1452.8 237.0 L1472.5 236.6 L1486.0 243.3 L1489.5 255.8 L1483.1 270.3 L1471.3 283.2 L1461.2 292.8Z"/><path d="M1471.0 300.0 L1482.3 309.3 L1499.9 322.7 L1515.5 340.0 L1521.1 358.2 L1512.9 372.6 L1492.9 379.2 L1467.2 377.4 L1443.0 370.6 L1424.6 364.3 L1412.2 363.8 L1402.1 370.9 L1390.0 383.4 L1373.6 395.6 L1354.7 401.5 L1337.6 397.4 L1327.1 383.8 L1325.2 365.0 L1329.6 346.4 L1334.9 332.5 L1335.0 324.4 L1326.3 320.3 L1309.2 316.6 L1288.4 310.3 L1269.6 300.0 L1257.6 286.6 L1254.2 272.0 L1258.1 258.0 L1266.7 245.2 L1277.6 233.7 L1290.4 223.3 L1305.4 215.1 L1323.1 210.9 L1342.8 212.3 L1362.0 219.7 L1378.2 230.9 L1390.0 241.9 L1398.8 248.4 L1408.2 247.7 L1422.0 240.6 L1441.6 231.2 L1465.0 224.8 L1486.6 225.7 L1500.1 235.0 L1501.8 250.3 L1493.2 267.1 L1480.1 281.4 L1470.6 291.8Z"/><path d="M289.8 330.0 L289.4 332.0 L288.4 333.8 L286.9 335.4 L284.9 336.6 L282.8 337.5 L280.8 338.3 L279.1 339.1 L277.6 340.1 L276.0 341.1 L274.2 342.1 L272.2 342.7 L270.0 343.0 L267.8 342.8 L265.7 342.3 L263.6 341.8 L261.5 341.4 L259.1 340.9 L256.6 340.3 L254.2 339.4 L252.3 337.9 L251.3 336.0 L251.3 333.9 L252.0 331.8 L253.0 330.0 L253.7 328.4 L253.8 326.7 L253.5 324.7 L253.1 322.5 L253.4 320.2 L254.8 318.3 L257.3 317.2 L260.4 317.3 L263.7 318.2 L266.4 319.7 L268.5 321.0 L270.0 321.6 L271.5 321.3 L273.4 320.2 L276.0 318.9 L279.1 317.9 L282.2 317.7 L285.0 318.5 L287.1 319.9 L288.4 321.8 L289.1 323.9 L289.5 326.0 L289.8 328.0Z"/><path d="M301.2 330.0 L300.5 333.1 L298.9 335.9 L296.3 338.4 L293.2 340.3 L289.9 341.8 L287.0 343.1 L284.5 344.5 L282.1 346.1 L279.7 347.9 L276.8 349.5 L273.5 350.6 L270.0 350.9 L266.5 350.6 L263.1 349.9 L259.7 349.2 L256.1 348.5 L252.2 347.8 L248.1 346.8 L244.3 345.1 L241.6 342.6 L240.3 339.5 L240.5 336.1 L241.7 332.9 L243.2 330.0 L244.0 327.4 L243.9 324.6 L243.2 321.4 L242.7 317.9 L243.4 314.3 L246.0 311.5 L250.2 310.1 L255.3 310.4 L260.4 312.1 L264.6 314.4 L267.6 316.1 L270.0 316.5 L272.5 315.4 L275.8 313.4 L280.1 311.2 L285.2 309.7 L290.2 309.7 L294.5 311.2 L297.6 313.7 L299.4 316.9 L300.4 320.3 L301.0 323.6 L301.3 326.8Z"/><path d="M318.8 330.0 L317.4 334.8 L314.7 339.2 L310.6 342.9 L305.7 345.9 L300.9 348.2 L296.6 350.4 L292.8 352.9 L289.3 355.7 L285.5 358.7 L280.9 361.3 L275.6 362.9 L270.0 363.4 L264.4 362.9 L258.9 361.9 L253.4 360.8 L247.6 359.9 L241.2 358.8 L234.8 357.1 L229.0 354.2 L225.0 350.0 L223.3 344.9 L224.0 339.5 L226.0 334.5 L228.0 330.0 L228.8 325.8 L228.2 321.4 L226.9 316.3 L226.3 310.6 L228.0 305.2 L232.5 301.2 L239.6 299.5 L247.8 300.4 L255.6 303.2 L261.8 306.4 L266.3 308.4 L270.0 308.2 L274.1 305.8 L279.7 302.1 L287.0 298.5 L295.1 296.5 L303.0 296.9 L309.4 299.7 L313.9 304.1 L316.4 309.4 L317.8 314.8 L318.6 320.0 L319.0 325.0Z"/><path d="M335.8 330.0 L333.8 336.5 L329.8 342.3 L324.2 347.3 L317.8 351.2 L311.5 354.5 L306.1 357.8 L301.4 361.5 L296.8 365.7 L291.5 370.0 L285.2 373.5 L277.8 375.7 L270.0 376.3 L262.2 375.6 L254.6 374.3 L246.9 373.0 L238.6 371.8 L229.8 370.3 L221.0 367.7 L213.4 363.4 L208.4 357.3 L206.7 350.2 L207.9 342.8 L210.6 336.0 L212.9 330.0 L213.4 324.3 L212.0 318.0 L210.0 310.9 L209.6 303.2 L212.5 296.1 L219.5 291.1 L229.6 289.5 L240.9 291.2 L251.2 295.0 L259.2 298.9 L265.0 300.6 L270.0 299.2 L276.0 294.9 L284.2 289.3 L294.5 284.4 L305.9 282.2 L316.4 283.4 L324.8 287.9 L330.2 294.4 L333.3 301.9 L334.9 309.3 L335.9 316.4 L336.3 323.3Z"/><path d="M355.0 330.0 L352.1 338.3 L346.7 345.8 L339.4 352.1 L331.3 357.2 L323.7 361.7 L317.2 366.3 L311.5 371.6 L305.6 377.5 L298.7 383.3 L290.2 388.0 L280.4 390.8 L270.0 391.4 L259.7 390.5 L249.5 388.9 L239.1 387.4 L228.0 386.0 L216.3 383.9 L204.8 380.1 L195.4 374.0 L189.6 365.7 L188.1 356.1 L190.0 346.5 L193.2 337.8 L195.5 330.0 L195.3 322.4 L192.9 314.1 L190.3 304.6 L190.3 294.6 L195.0 285.7 L205.1 280.0 L218.8 278.7 L233.5 281.4 L246.4 286.2 L256.2 290.3 L263.4 291.2 L270.0 287.9 L278.4 281.1 L289.8 273.2 L303.9 267.1 L318.8 264.9 L332.3 267.6 L342.5 274.3 L348.9 283.4 L352.4 293.4 L354.2 303.2 L355.2 312.4 L355.7 321.3Z"/><path d="M363.0 330.0 L359.6 339.1 L353.5 347.2 L345.6 354.1 L337.0 359.8 L329.2 365.0 L322.6 370.5 L316.8 376.9 L310.4 383.9 L302.6 390.6 L292.9 395.8 L281.7 398.6 L270.0 399.2 L258.3 398.2 L246.8 396.6 L234.9 395.1 L222.3 393.6 L209.1 391.0 L196.6 386.4 L186.8 379.1 L181.1 369.5 L180.1 358.7 L182.4 348.1 L185.7 338.5 L187.3 330.0 L186.2 321.5 L182.9 312.0 L180.1 301.3 L180.8 290.4 L187.2 281.1 L199.3 275.6 L215.1 274.9 L231.2 278.2 L244.8 283.2 L254.9 286.6 L262.5 286.0 L270.0 280.6 L279.9 271.9 L293.4 262.8 L309.6 256.5 L326.2 255.2 L340.6 259.2 L351.1 267.6 L357.4 278.4 L360.7 289.7 L362.4 300.6 L363.5 310.7 L364.0 320.5Z"/><path d="M379.7 330.0 L375.4 340.7 L368.1 350.2 L358.9 358.3 L349.3 365.2 L340.8 371.8 L333.7 379.0 L327.1 387.2 L319.6 396.1 L310.0 404.3 L298.0 410.4 L284.3 413.7 L270.0 414.2 L255.8 413.0 L241.7 411.2 L227.1 409.6 L211.6 407.8 L195.8 404.4 L181.2 398.3 L170.1 389.0 L164.2 377.0 L163.7 363.9 L166.6 351.3 L169.9 340.1 L170.8 330.0 L168.3 319.7 L163.9 308.1 L160.8 295.2 L162.7 282.3 L171.7 272.0 L187.2 266.3 L206.5 266.3 L225.3 270.5 L240.7 275.6 L251.9 278.1 L260.6 275.4 L270.0 267.1 L282.7 255.6 L299.8 244.6 L319.6 237.9 L339.3 237.6 L355.8 243.9 L367.4 255.1 L374.0 268.6 L377.4 282.3 L379.2 295.2 L380.5 307.2 L381.0 318.8Z"/><path d="M1172.5 230.0 L1175.9 231.6 L1179.3 234.0 L1181.4 236.8 L1181.3 239.4 L1178.9 241.1 L1175.1 241.6 L1171.1 241.2 L1167.8 240.5 L1165.5 240.3 L1163.9 241.1 L1162.2 242.7 L1160.0 244.5 L1157.3 245.8 L1154.4 246.1 L1151.7 245.3 L1149.6 243.9 L1147.7 242.3 L1145.8 240.9 L1143.7 239.6 L1141.2 238.3 L1139.1 236.7 L1137.9 234.6 L1138.2 232.2 L1140.1 230.0 L1142.8 228.3 L1145.5 227.0 L1147.4 226.0 L1148.2 224.7 L1148.1 223.0 L1148.0 220.7 L1148.5 218.5 L1150.0 216.7 L1152.4 215.9 L1155.1 215.9 L1157.7 216.4 L1160.0 216.5 L1162.4 215.9 L1165.3 214.7 L1169.0 213.3 L1173.0 212.7 L1176.5 213.4 L1178.5 215.8 L1178.3 219.2 L1176.3 222.8 L1173.4 225.7 L1171.1 227.7 L1170.7 228.9Z"/><path d="M1179.7 230.0 L1185.1 232.5 L1190.1 236.2 L1192.7 240.4 L1191.7 244.1 L1187.6 246.3 L1181.7 246.7 L1175.9 245.9 L1171.3 245.1 L1168.2 245.2 L1165.9 246.8 L1163.3 249.5 L1160.0 252.2 L1155.9 254.0 L1151.6 254.2 L1147.7 252.8 L1144.5 250.6 L1141.8 248.3 L1138.9 246.2 L1135.6 244.4 L1132.0 242.4 L1129.1 239.9 L1127.7 236.7 L1128.6 233.2 L1131.6 230.0 L1135.6 227.5 L1139.3 225.7 L1141.6 224.1 L1142.2 222.1 L1141.8 219.2 L1141.5 215.8 L1142.4 212.4 L1144.9 209.9 L1148.6 208.9 L1152.7 209.0 L1156.5 209.6 L1160.0 209.6 L1163.7 208.4 L1168.2 206.4 L1173.7 204.5 L1179.5 204.0 L1184.3 205.6 L1186.6 209.5 L1185.8 214.8 L1182.5 220.0 L1178.4 224.1 L1175.8 226.7 L1176.1 228.4Z"/><path d="M1192.5 230.0 L1201.4 234.2 L1208.9 240.1 L1211.9 246.5 L1209.3 251.9 L1202.0 254.8 L1192.6 255.1 L1183.8 253.8 L1177.2 252.9 L1172.8 253.7 L1169.3 256.8 L1165.4 261.4 L1160.0 265.6 L1153.5 268.1 L1146.8 267.9 L1140.9 265.5 L1136.0 262.0 L1131.7 258.4 L1127.1 255.3 L1121.9 252.5 L1116.5 249.3 L1112.3 245.2 L1110.8 240.1 L1112.8 234.8 L1117.8 230.0 L1123.8 226.3 L1128.9 223.6 L1131.6 220.9 L1131.7 217.4 L1130.6 212.7 L1130.2 207.1 L1132.0 201.9 L1136.3 198.4 L1142.2 197.0 L1148.6 197.3 L1154.5 197.9 L1160.0 197.5 L1165.9 195.4 L1173.2 192.2 L1181.8 189.5 L1190.5 189.3 L1197.2 192.7 L1199.8 199.4 L1197.7 207.7 L1192.3 215.6 L1186.6 221.5 L1183.7 225.1 L1185.8 227.4Z"/><path d="M1207.2 230.0 L1219.7 236.0 L1229.2 244.3 L1231.9 252.9 L1226.7 259.6 L1215.8 262.9 L1202.8 262.9 L1191.2 261.3 L1183.0 260.6 L1177.6 262.7 L1173.1 267.7 L1167.6 274.3 L1160.0 280.0 L1151.0 282.8 L1141.9 282.0 L1134.0 278.3 L1127.5 273.3 L1121.6 268.5 L1115.2 264.5 L1108.0 260.7 L1100.8 256.3 L1095.7 250.5 L1094.5 243.5 L1098.0 236.3 L1105.0 230.0 L1112.8 225.2 L1118.8 221.5 L1121.2 217.6 L1120.4 212.4 L1118.5 205.5 L1118.0 197.7 L1120.9 190.8 L1127.2 186.4 L1135.7 184.8 L1144.4 185.3 L1152.4 185.9 L1160.0 184.8 L1168.3 181.4 L1178.5 177.0 L1190.2 173.9 L1201.5 174.6 L1209.5 180.3 L1211.8 190.1 L1208.1 201.6 L1200.6 212.0 L1193.8 219.2 L1191.7 223.5 L1196.6 226.3Z"/><path d="M1223.5 230.0 L1239.4 238.0 L1250.1 248.6 L1251.5 259.1 L1243.1 266.9 L1228.2 270.3 L1211.8 269.8 L1198.0 268.1 L1188.6 268.1 L1182.5 271.9 L1177.1 279.2 L1169.9 287.8 L1160.0 294.7 L1148.4 297.5 L1137.1 295.7 L1127.4 290.6 L1119.3 284.2 L1111.8 278.3 L1103.6 273.4 L1094.5 268.7 L1085.8 262.9 L1080.2 255.4 L1079.7 246.5 L1084.9 237.6 L1093.8 230.0 L1102.9 224.2 L1109.0 219.5 L1110.5 214.2 L1108.4 207.1 L1105.6 197.9 L1105.4 188.0 L1109.7 179.6 L1118.3 174.5 L1129.3 172.9 L1140.3 173.6 L1150.4 173.8 L1160.0 171.8 L1170.8 167.1 L1183.8 161.6 L1198.4 158.6 L1211.9 160.8 L1220.6 169.3 L1221.9 182.3 L1216.3 196.8 L1207.2 209.0 L1200.2 217.2 L1200.0 221.7 L1208.6 225.1Z"/><path d="M1243.6 230.0 L1262.9 240.4 L1274.2 253.5 L1273.3 266.1 L1260.7 274.7 L1241.3 278.0 L1221.3 277.2 L1205.4 275.5 L1195.1 276.8 L1188.4 282.8 L1181.9 292.8 L1172.6 303.6 L1160.0 311.6 L1145.6 314.1 L1131.8 311.0 L1120.1 304.1 L1110.4 296.1 L1101.0 289.1 L1090.7 283.3 L1079.4 277.6 L1069.3 270.3 L1063.4 260.8 L1064.0 249.8 L1071.1 239.0 L1081.9 230.0 L1092.0 223.1 L1097.7 217.2 L1097.7 210.2 L1093.9 200.7 L1090.2 188.8 L1090.6 176.6 L1096.8 166.7 L1108.2 161.0 L1122.1 159.6 L1135.7 160.3 L1148.0 160.0 L1160.0 156.7 L1173.6 150.5 L1189.9 144.1 L1207.6 141.6 L1223.1 146.0 L1232.0 157.8 L1232.0 174.6 L1224.3 192.1 L1213.8 206.1 L1207.4 214.9 L1210.3 219.6 L1223.6 223.6Z"/><path d="M1264.8 230.0 L1286.7 242.8 L1297.4 258.3 L1293.2 272.4 L1276.1 281.5 L1252.3 284.5 L1229.3 283.3 L1212.1 282.2 L1201.4 285.2 L1194.4 293.9 L1186.7 306.6 L1175.3 319.5 L1160.0 328.0 L1142.9 329.7 L1126.9 324.9 L1113.5 316.3 L1102.2 307.0 L1091.1 299.1 L1078.7 292.5 L1065.5 285.8 L1054.3 276.9 L1048.6 265.5 L1050.6 252.5 L1059.6 240.2 L1071.8 230.0 L1082.1 222.1 L1086.6 214.9 L1084.6 206.0 L1079.0 194.0 L1074.6 179.6 L1075.9 165.3 L1084.4 154.3 L1098.8 148.4 L1115.4 147.2 L1131.4 147.8 L1145.8 146.8 L1160.0 142.0 L1176.4 134.4 L1195.7 127.5 L1216.0 126.1 L1232.7 133.1 L1241.2 148.5 L1239.5 168.9 L1229.9 188.8 L1218.9 203.8 L1214.3 212.7 L1221.4 217.3 L1240.1 221.9Z"/><path d="M1311.9 80.0 L1309.8 82.0 L1307.2 83.6 L1304.9 84.8 L1303.5 86.0 L1302.7 87.5 L1302.1 89.3 L1301.0 91.1 L1299.2 92.2 L1296.6 92.3 L1293.9 91.2 L1291.6 89.5 L1290.0 87.8 L1288.8 86.8 L1287.6 86.9 L1285.6 88.1 L1282.7 89.7 L1279.0 91.0 L1275.1 91.5 L1271.8 90.7 L1269.7 89.0 L1269.0 86.7 L1269.5 84.2 L1270.7 82.0 L1272.2 80.0 L1273.7 78.3 L1275.2 76.9 L1276.7 75.8 L1278.2 74.8 L1279.7 73.9 L1280.9 73.0 L1281.8 71.8 L1282.6 70.1 L1283.6 68.2 L1285.2 66.2 L1287.4 64.9 L1290.0 64.6 L1292.5 65.5 L1294.3 67.6 L1295.4 70.0 L1295.9 72.2 L1296.5 73.5 L1297.9 73.9 L1300.5 73.8 L1304.2 73.7 L1308.1 74.2 L1311.1 75.7 L1312.4 77.7Z"/><path d="M1332.5 80.0 L1328.0 83.9 L1322.9 86.8 L1318.7 89.1 L1316.2 91.6 L1315.0 94.7 L1313.8 98.3 L1311.6 101.6 L1307.7 103.5 L1302.6 103.3 L1297.3 101.1 L1293.0 97.7 L1290.0 94.8 L1287.7 93.5 L1284.9 94.5 L1280.6 97.4 L1274.4 100.8 L1266.9 103.2 L1259.3 103.6 L1253.3 101.6 L1249.9 97.8 L1249.2 93.0 L1250.7 88.1 L1253.2 83.7 L1256.2 80.0 L1259.0 76.9 L1261.8 74.2 L1264.5 71.9 L1267.3 69.9 L1269.8 68.1 L1271.8 66.0 L1273.4 63.4 L1274.9 59.9 L1277.1 56.0 L1280.3 52.3 L1284.9 49.9 L1290.0 49.8 L1294.8 52.2 L1298.2 56.4 L1300.1 61.2 L1301.2 65.0 L1302.9 67.1 L1306.3 67.4 L1312.2 66.9 L1319.7 66.8 L1327.2 68.2 L1332.5 71.2 L1334.4 75.5Z"/><path d="M1345.4 80.0 L1339.0 85.0 L1332.2 88.7 L1327.1 91.8 L1324.3 95.3 L1323.1 99.5 L1321.6 104.3 L1318.4 108.4 L1312.9 110.5 L1306.1 109.8 L1299.3 106.7 L1293.8 102.5 L1290.0 99.2 L1286.8 98.5 L1282.7 100.8 L1276.4 105.2 L1267.6 109.8 L1257.4 112.7 L1247.7 112.5 L1240.5 109.2 L1236.9 103.6 L1236.8 96.9 L1239.3 90.5 L1243.0 84.8 L1246.8 80.0 L1250.4 76.0 L1253.7 72.5 L1257.1 69.5 L1260.3 66.8 L1263.2 64.2 L1265.5 61.2 L1267.3 57.3 L1269.3 52.4 L1272.3 47.1 L1276.9 42.4 L1283.1 39.9 L1290.0 40.4 L1296.1 44.2 L1300.5 49.9 L1302.9 56.0 L1304.7 60.4 L1307.5 62.5 L1313.0 62.3 L1321.5 61.4 L1331.8 61.5 L1341.3 63.6 L1347.6 68.1 L1348.8 74.0Z"/><path d="M1371.6 80.0 L1361.4 87.2 L1351.5 92.7 L1344.6 97.4 L1341.4 102.8 L1339.9 109.5 L1337.6 116.6 L1332.4 122.5 L1323.8 125.0 L1313.4 123.4 L1303.4 118.4 L1295.6 112.7 L1290.0 109.0 L1285.0 109.4 L1278.1 114.2 L1267.7 121.5 L1253.7 128.3 L1238.2 131.9 L1224.2 130.6 L1214.6 124.5 L1210.5 115.3 L1211.6 105.0 L1216.1 95.2 L1221.8 86.9 L1227.4 80.0 L1232.4 74.2 L1236.9 69.1 L1241.3 64.5 L1245.6 60.3 L1249.3 56.0 L1252.2 51.0 L1254.7 44.6 L1257.6 36.9 L1262.5 28.8 L1269.9 22.3 L1279.6 19.4 L1290.0 21.2 L1299.0 27.5 L1305.2 36.4 L1308.9 44.9 L1312.0 50.7 L1317.3 52.6 L1326.9 51.6 L1340.7 50.1 L1356.4 50.5 L1370.1 54.5 L1378.0 61.9 L1378.2 71.1Z"/><path d="M1386.8 80.0 L1374.0 88.5 L1362.5 94.9 L1355.3 100.8 L1352.3 107.7 L1351.0 116.0 L1348.1 124.7 L1341.1 131.3 L1330.2 133.6 L1317.5 131.0 L1305.7 125.0 L1296.6 118.8 L1290.0 115.8 L1283.5 118.2 L1274.2 125.5 L1260.4 135.0 L1242.7 143.0 L1223.9 146.3 L1207.8 143.2 L1197.6 134.5 L1194.3 122.5 L1197.0 109.6 L1203.1 97.9 L1210.2 88.1 L1216.6 80.0 L1222.0 73.1 L1226.9 67.0 L1231.5 61.4 L1235.9 56.0 L1239.7 50.3 L1242.7 43.6 L1245.3 35.2 L1249.1 25.5 L1255.5 15.9 L1265.1 8.6 L1277.4 6.2 L1290.0 9.6 L1300.6 18.0 L1307.9 28.8 L1312.4 38.3 L1317.0 44.0 L1324.8 45.1 L1338.0 43.1 L1355.8 41.1 L1375.0 42.3 L1390.5 48.0 L1398.1 57.7 L1396.3 69.2Z"/><path d="M1402.5 80.0 L1386.9 89.8 L1374.1 97.3 L1366.8 104.5 L1364.5 113.1 L1363.4 123.3 L1359.6 133.5 L1350.6 140.8 L1337.1 142.7 L1321.8 139.1 L1308.2 132.1 L1297.9 125.9 L1290.0 124.4 L1281.6 129.3 L1269.3 139.5 L1251.6 151.4 L1229.7 160.3 L1207.6 162.6 L1189.7 157.1 L1179.4 145.3 L1177.5 130.0 L1182.1 114.4 L1190.1 100.6 L1198.4 89.3 L1205.4 80.0 L1211.0 72.0 L1215.8 64.7 L1220.5 57.8 L1224.8 51.1 L1228.5 43.7 L1231.4 34.9 L1234.4 24.3 L1239.2 12.4 L1247.5 1.1 L1259.9 -6.5 L1274.9 -8.1 L1290.0 -2.7 L1302.3 8.1 L1310.7 20.7 L1316.4 31.0 L1322.9 36.1 L1334.0 35.9 L1351.4 32.8 L1373.8 30.6 L1396.4 32.8 L1413.3 40.7 L1419.9 53.2 L1415.3 67.3Z"/><path d="M1414.8 80.0 L1397.0 90.8 L1383.7 99.3 L1377.1 107.8 L1375.7 118.1 L1374.9 130.1 L1370.0 141.5 L1358.9 149.1 L1342.9 150.4 L1325.4 145.8 L1310.3 138.4 L1299.1 132.9 L1290.0 133.4 L1279.5 141.3 L1264.0 154.6 L1242.4 168.4 L1216.9 177.5 L1192.1 178.1 L1173.4 169.7 L1163.9 154.4 L1163.9 136.0 L1170.6 118.0 L1180.1 102.6 L1189.2 90.2 L1196.3 80.0 L1201.5 71.0 L1205.9 62.7 L1210.1 54.6 L1214.1 46.3 L1217.4 37.2 L1220.2 26.3 L1223.6 13.4 L1229.6 -0.4 L1240.0 -12.8 L1255.1 -20.3 L1272.8 -20.5 L1290.0 -13.0 L1303.7 -0.1 L1313.0 13.8 L1320.1 24.1 L1328.9 28.1 L1343.6 26.3 L1365.4 22.0 L1391.8 19.9 L1417.0 23.6 L1434.2 34.1 L1438.8 49.3 L1430.9 65.7Z"/><path d="M995.5 90.0 L994.7 91.5 L993.9 92.9 L992.9 94.1 L991.8 95.2 L990.4 96.1 L988.8 96.7 L987.1 97.1 L985.6 97.4 L984.3 97.9 L983.1 98.8 L981.7 100.2 L980.0 101.6 L977.8 102.9 L975.4 103.3 L973.1 102.9 L971.4 101.5 L970.5 99.5 L970.3 97.4 L970.3 95.7 L969.9 94.5 L968.8 93.6 L967.0 92.7 L965.0 91.5 L963.3 90.0 L962.7 88.2 L963.3 86.6 L965.1 85.2 L967.4 84.4 L969.7 83.9 L971.5 83.5 L972.9 82.8 L973.9 81.9 L975.0 80.8 L976.4 79.7 L978.1 79.0 L980.0 78.9 L981.8 79.2 L983.5 79.9 L985.1 80.5 L986.7 81.0 L988.6 81.4 L990.6 81.8 L992.7 82.5 L994.5 83.6 L995.7 85.0 L996.2 86.7 L996.0 88.4Z"/><path d="M1009.3 90.0 L1007.8 92.8 L1006.3 95.4 L1004.5 97.8 L1002.3 99.9 L999.6 101.6 L996.6 102.8 L993.5 103.6 L990.8 104.4 L988.4 105.7 L986.2 107.7 L983.5 110.5 L980.0 113.3 L975.6 115.5 L970.9 116.0 L966.7 114.7 L963.7 111.7 L962.3 107.8 L961.9 103.9 L961.7 100.8 L960.6 98.6 L958.0 97.0 L954.2 95.3 L950.2 93.0 L947.3 90.0 L946.6 86.6 L948.3 83.5 L951.9 81.1 L956.4 79.5 L960.7 78.6 L963.9 77.7 L966.3 76.2 L968.1 74.2 L970.2 71.9 L973.0 69.8 L976.3 68.6 L980.0 68.4 L983.6 69.2 L986.8 70.4 L989.9 71.5 L993.2 72.4 L996.9 73.0 L1000.9 73.9 L1004.9 75.3 L1008.2 77.5 L1010.2 80.4 L1010.9 83.6 L1010.4 86.9Z"/><path d="M1024.4 90.0 L1022.2 94.3 L1019.9 98.2 L1017.2 101.9 L1013.9 105.1 L1009.9 107.6 L1005.3 109.5 L1000.9 110.9 L996.9 112.5 L993.4 115.0 L990.0 118.6 L985.7 123.0 L980.0 127.4 L973.1 130.3 L965.9 130.5 L959.6 127.8 L955.4 122.8 L953.5 116.6 L952.9 110.9 L952.2 106.4 L949.8 103.4 L945.2 101.1 L938.9 98.5 L932.8 94.8 L928.8 90.0 L928.4 84.8 L931.8 80.1 L937.8 76.6 L944.8 74.4 L951.0 72.9 L955.5 71.2 L958.7 68.6 L961.4 65.2 L964.6 61.4 L968.9 58.3 L974.3 56.5 L980.0 56.5 L985.5 57.8 L990.6 59.5 L995.5 61.1 L1000.8 62.3 L1006.7 63.2 L1013.1 64.6 L1019.1 66.9 L1023.8 70.6 L1026.6 75.2 L1027.2 80.3 L1026.3 85.3Z"/><path d="M1040.3 90.0 L1037.4 95.8 L1034.4 101.2 L1030.8 106.2 L1026.4 110.6 L1020.9 114.2 L1014.9 116.9 L1009.1 119.1 L1003.9 121.9 L999.3 125.8 L994.4 131.4 L988.2 137.8 L980.0 143.6 L970.3 147.0 L960.3 146.4 L952.1 141.9 L946.7 134.3 L944.3 125.8 L943.4 118.1 L941.8 112.5 L937.6 108.8 L930.3 105.8 L921.2 102.1 L913.0 96.8 L908.3 90.0 L908.8 82.8 L914.4 76.5 L923.2 71.9 L932.7 69.0 L940.7 66.8 L946.3 64.1 L950.1 60.1 L953.6 54.9 L958.2 49.5 L964.4 45.2 L972.0 43.1 L980.0 43.3 L987.7 45.1 L994.8 47.4 L1001.9 49.4 L1009.5 50.7 L1017.9 52.0 L1026.8 54.0 L1034.9 57.6 L1041.0 62.9 L1044.3 69.5 L1044.7 76.7 L1043.0 83.6Z"/><path d="M1054.0 90.0 L1050.5 97.1 L1046.9 103.8 L1042.8 110.0 L1037.4 115.5 L1030.8 120.0 L1023.6 123.5 L1016.7 126.8 L1010.7 130.9 L1005.1 136.6 L998.8 144.1 L990.7 152.3 L980.0 159.1 L967.6 162.3 L955.4 160.5 L945.6 153.8 L939.5 143.9 L936.8 133.3 L935.4 124.3 L932.4 118.1 L926.0 114.0 L915.9 110.4 L904.2 105.6 L894.4 98.7 L889.6 90.0 L891.6 81.0 L899.6 73.4 L911.1 68.0 L922.6 64.5 L931.8 61.5 L937.9 57.6 L942.1 52.0 L946.2 45.0 L952.1 38.1 L960.1 33.0 L969.8 30.7 L980.0 31.2 L989.7 33.6 L998.7 36.3 L1007.8 38.4 L1017.6 39.9 L1028.5 41.4 L1039.5 44.2 L1049.4 49.1 L1056.4 56.1 L1059.7 64.6 L1059.7 73.6 L1057.3 82.2Z"/><path d="M1069.3 90.0 L1065.3 98.6 L1061.3 106.8 L1056.4 114.4 L1050.1 121.1 L1042.3 126.7 L1033.9 131.4 L1025.9 136.0 L1018.9 141.8 L1012.2 149.7 L1004.2 159.5 L993.6 169.6 L980.0 177.3 L964.6 180.0 L949.9 176.4 L938.5 167.0 L931.7 154.4 L928.5 141.6 L926.2 131.4 L921.4 124.6 L912.0 120.2 L898.5 116.0 L884.0 109.8 L872.7 100.9 L868.3 90.0 L872.4 79.1 L883.4 70.1 L897.7 63.8 L911.3 59.5 L921.5 55.4 L927.9 49.9 L932.4 42.2 L937.3 33.2 L944.8 24.6 L955.1 18.6 L967.4 16.2 L980.0 17.2 L992.0 20.1 L1003.3 23.2 L1014.7 25.5 L1027.3 27.0 L1040.9 29.0 L1054.5 32.7 L1066.0 39.2 L1073.9 48.3 L1077.1 59.1 L1076.4 70.1 L1073.3 80.6Z"/><path d="M1079.4 90.0 L1075.4 99.7 L1071.3 108.8 L1066.1 117.4 L1059.2 125.2 L1050.7 131.7 L1041.7 137.5 L1033.3 143.4 L1025.7 150.9 L1018.1 160.7 L1008.7 172.3 L996.0 183.5 L980.0 191.3 L962.4 192.9 L946.1 187.2 L934.0 175.5 L926.9 160.8 L923.3 146.8 L919.9 136.3 L912.9 129.6 L900.7 125.2 L884.4 120.5 L867.9 113.1 L856.2 102.5 L853.2 90.0 L859.6 77.8 L873.2 68.0 L889.4 61.1 L903.9 56.2 L914.1 51.1 L920.2 44.0 L924.6 34.4 L930.2 23.7 L939.1 14.0 L951.3 7.6 L965.5 5.4 L980.0 6.9 L993.7 10.2 L1006.7 13.4 L1020.1 15.5 L1034.8 17.0 L1050.5 19.4 L1065.7 24.1 L1078.2 32.1 L1086.1 42.9 L1088.8 55.3 L1087.4 67.9 L1083.7 79.5Z"/><path d="M621.3 110.0 L620.4 112.1 L618.0 113.7 L615.4 114.9 L613.4 115.9 L612.5 117.4 L612.6 119.7 L612.8 122.8 L612.2 126.2 L610.2 128.9 L607.1 130.3 L603.4 129.9 L600.0 128.1 L597.3 125.5 L595.5 123.1 L593.9 121.3 L592.3 120.2 L590.4 119.6 L588.4 118.9 L586.7 117.9 L585.5 116.4 L584.9 114.8 L584.5 113.2 L583.6 111.7 L582.0 110.0 L579.9 108.0 L578.0 105.5 L577.2 102.7 L578.2 100.3 L580.9 98.7 L584.7 98.3 L588.7 98.7 L591.9 99.2 L594.2 99.2 L595.8 98.1 L597.6 95.9 L600.0 93.5 L603.1 91.7 L606.5 91.4 L609.2 92.9 L610.8 95.7 L611.1 98.9 L610.9 101.6 L611.1 103.4 L612.4 104.5 L614.9 105.2 L618.0 106.3 L620.4 107.9Z"/><path d="M634.0 110.0 L632.1 113.3 L628.3 115.8 L624.2 117.7 L621.5 119.6 L620.7 122.2 L621.1 126.2 L621.3 131.3 L620.0 136.6 L616.4 140.5 L611.2 142.0 L605.3 140.8 L600.0 137.5 L596.0 133.4 L593.1 129.7 L590.7 127.3 L588.0 126.0 L584.8 125.2 L581.5 124.2 L578.7 122.6 L576.9 120.3 L575.8 117.7 L574.8 115.2 L573.0 112.7 L570.2 110.0 L566.7 106.6 L564.0 102.6 L563.3 98.3 L565.4 94.7 L570.3 92.5 L576.5 92.0 L582.7 92.6 L587.5 93.3 L590.7 92.8 L593.2 90.5 L596.0 86.8 L600.0 82.9 L605.0 80.5 L610.2 80.6 L614.3 83.5 L616.4 88.1 L616.8 93.1 L616.7 97.2 L617.4 99.7 L620.1 101.1 L624.5 102.2 L629.4 103.9 L633.1 106.7Z"/><path d="M651.4 110.0 L647.9 114.9 L642.0 118.7 L636.4 121.6 L633.0 124.7 L632.4 129.1 L633.3 135.6 L633.5 143.5 L630.9 151.1 L625.0 156.4 L616.6 157.7 L607.7 155.0 L600.0 149.5 L594.3 143.4 L590.1 138.3 L586.4 135.2 L582.1 133.8 L577.1 133.0 L571.9 131.6 L567.7 129.1 L564.8 125.6 L563.0 121.8 L561.1 118.0 L557.9 114.3 L553.2 110.0 L548.0 104.7 L544.3 98.5 L544.1 92.2 L548.3 87.1 L556.3 84.2 L565.9 83.8 L574.8 84.8 L581.5 85.4 L585.9 83.9 L589.5 79.7 L593.8 73.8 L600.0 68.1 L607.7 65.1 L615.3 66.2 L620.9 71.2 L623.7 78.5 L624.2 85.8 L624.2 91.3 L626.1 94.6 L631.0 96.2 L638.2 97.8 L645.7 100.6 L650.7 104.9Z"/><path d="M665.1 110.0 L660.1 116.1 L652.6 120.8 L646.1 124.7 L642.8 129.0 L642.8 135.3 L644.2 144.0 L644.0 154.1 L639.9 163.2 L631.6 168.8 L620.6 169.2 L609.4 164.9 L600.0 157.5 L593.2 149.9 L588.1 144.2 L583.3 141.1 L577.5 140.0 L570.8 139.3 L564.1 137.6 L558.6 134.4 L554.9 130.0 L552.3 125.2 L549.3 120.5 L544.6 115.6 L538.3 110.0 L531.9 103.1 L528.0 95.2 L528.9 87.4 L535.4 81.3 L546.2 78.2 L558.4 78.0 L569.2 79.1 L576.9 79.3 L581.9 76.5 L586.2 70.4 L591.9 62.6 L600.0 55.8 L609.8 52.9 L619.1 55.3 L625.6 62.4 L628.6 71.9 L629.2 80.8 L629.9 87.0 L633.3 90.4 L640.4 92.0 L650.2 94.0 L659.5 97.7 L665.1 103.4Z"/><path d="M682.2 110.0 L675.1 117.6 L665.9 123.6 L658.5 128.7 L655.6 134.7 L656.5 143.3 L658.3 154.9 L657.4 167.5 L651.2 178.2 L639.8 183.9 L625.4 183.0 L611.4 176.4 L600.0 166.8 L591.8 157.7 L585.6 151.4 L579.2 148.6 L571.5 148.0 L562.6 147.5 L553.9 145.4 L547.0 141.3 L542.1 135.7 L538.4 129.6 L533.9 123.6 L527.4 117.4 L519.1 110.0 L511.4 101.0 L507.6 90.9 L510.2 81.4 L519.8 74.4 L534.2 71.1 L549.5 71.1 L562.3 72.2 L571.1 71.5 L576.7 66.8 L582.0 58.2 L589.4 48.1 L600.0 40.2 L612.4 37.8 L623.6 42.2 L631.2 52.0 L634.5 64.1 L635.3 74.6 L637.0 81.5 L642.6 84.8 L653.0 86.5 L665.9 89.0 L677.3 94.1 L683.4 101.6Z"/><path d="M700.9 110.0 L691.5 119.3 L680.5 126.6 L672.7 133.2 L670.5 141.3 L672.5 152.8 L674.7 167.5 L672.6 182.8 L663.6 194.8 L648.5 200.0 L630.4 197.2 L613.3 187.9 L600.0 176.0 L590.5 165.6 L582.9 159.2 L574.7 157.1 L564.6 157.2 L553.1 157.0 L542.2 154.4 L533.6 149.2 L527.4 142.2 L522.3 134.7 L516.0 127.3 L507.2 119.4 L496.8 110.0 L488.0 98.7 L484.9 86.3 L490.1 75.0 L503.4 67.1 L521.7 63.8 L540.2 64.0 L554.9 64.8 L564.4 62.6 L570.6 55.4 L577.0 43.9 L586.6 31.5 L600.0 22.8 L615.2 21.4 L628.4 28.4 L636.9 41.4 L640.5 56.1 L641.8 68.1 L645.1 75.3 L653.7 78.3 L667.8 79.9 L684.2 83.2 L697.7 89.9 L703.7 99.5Z"/><path d="M716.5 110.0 L705.1 120.6 L693.0 129.2 L685.5 137.2 L684.5 147.5 L687.7 161.7 L689.8 179.1 L686.1 196.3 L674.0 208.6 L655.3 212.6 L633.9 207.4 L614.7 195.7 L600.0 182.1 L589.5 171.2 L580.7 165.5 L570.6 164.5 L558.2 165.7 L544.4 165.7 L531.6 162.6 L521.5 156.4 L514.1 148.2 L507.5 139.5 L499.3 130.7 L488.4 121.3 L476.4 110.0 L467.3 96.6 L465.6 82.3 L473.8 69.8 L490.9 61.5 L512.6 58.4 L533.3 58.7 L548.9 58.8 L558.5 54.7 L564.9 44.9 L572.3 30.6 L584.0 16.4 L600.0 7.7 L617.4 8.1 L632.1 17.9 L641.0 33.8 L644.8 50.3 L646.9 63.0 L652.4 69.7 L664.2 72.1 L682.0 73.6 L701.3 77.7 L715.9 86.1 L721.3 97.7Z"/><path d="M815.9 200.0 L818.1 201.8 L819.1 203.9 L818.6 205.9 L816.5 207.3 L813.7 208.1 L810.7 208.3 L808.3 208.3 L806.5 208.7 L805.2 209.7 L803.9 211.3 L802.2 213.1 L800.0 214.6 L797.4 215.3 L794.8 214.9 L792.7 213.6 L791.2 211.7 L790.4 209.6 L790.0 207.7 L789.6 206.1 L789.1 204.8 L788.4 203.7 L787.7 202.5 L787.0 201.3 L786.5 200.0 L786.2 198.6 L786.0 197.1 L785.9 195.5 L786.0 193.8 L786.4 192.0 L787.4 190.3 L788.9 188.9 L790.8 187.8 L793.1 187.1 L795.4 186.8 L797.7 186.6 L800.0 186.5 L802.3 186.5 L804.6 186.7 L806.7 187.5 L808.4 188.9 L809.3 190.7 L809.5 192.7 L809.2 194.6 L809.0 196.0 L809.5 197.0 L810.9 197.8 L813.2 198.7Z"/><path d="M836.9 200.0 L841.4 204.2 L843.0 208.9 L840.9 213.0 L835.9 216.0 L829.4 217.4 L823.0 217.7 L818.0 218.0 L814.4 219.2 L811.8 221.9 L809.0 225.8 L805.1 229.8 L800.0 232.8 L794.2 233.8 L788.7 232.5 L784.3 229.2 L781.4 224.8 L779.7 220.3 L778.8 216.3 L777.7 213.1 L776.3 210.5 L774.5 208.1 L772.6 205.6 L771.0 202.9 L769.7 200.0 L768.8 196.8 L768.1 193.4 L767.9 189.8 L768.1 185.9 L769.3 181.9 L771.7 178.2 L775.2 175.2 L779.7 173.0 L784.7 171.7 L789.9 170.9 L795.0 170.5 L800.0 170.3 L805.1 170.4 L810.0 171.2 L814.5 173.1 L817.8 176.2 L819.7 180.3 L820.0 184.6 L819.6 188.4 L819.7 191.3 L821.4 193.2 L825.2 194.8 L830.9 196.9Z"/><path d="M854.9 200.0 L860.6 206.1 L861.8 212.7 L857.8 218.4 L850.0 222.2 L840.6 223.9 L831.8 224.5 L825.2 225.3 L820.7 227.6 L817.2 232.0 L813.2 237.8 L807.4 243.4 L800.0 247.3 L791.8 248.0 L784.2 245.4 L778.3 240.3 L774.6 233.9 L772.4 227.6 L770.9 222.4 L769.2 218.2 L766.7 214.8 L763.7 211.6 L760.6 208.1 L758.0 204.3 L755.9 200.0 L754.4 195.4 L753.4 190.4 L753.0 185.0 L753.6 179.4 L755.5 173.7 L759.2 168.6 L764.6 164.5 L771.2 161.6 L778.4 159.9 L785.7 159.0 L792.9 158.5 L800.0 158.2 L807.1 158.5 L814.0 159.9 L820.0 162.8 L824.4 167.4 L826.8 173.2 L827.3 179.0 L827.1 184.0 L828.0 187.6 L831.4 190.0 L837.9 192.2 L846.4 195.3Z"/><path d="M873.8 200.0 L880.1 208.1 L880.1 216.5 L873.7 223.5 L862.9 227.9 L850.7 229.9 L840.0 230.7 L832.2 232.3 L827.1 236.1 L822.8 242.4 L817.5 250.1 L809.8 257.2 L800.0 261.4 L789.5 261.4 L780.1 257.2 L773.0 250.1 L768.6 241.8 L766.0 234.1 L763.8 227.8 L761.1 223.0 L757.3 219.0 L752.9 215.0 L748.4 210.6 L744.6 205.6 L741.7 200.0 L739.7 193.9 L738.3 187.3 L737.9 180.2 L738.8 172.8 L741.7 165.6 L746.9 159.2 L754.3 154.1 L763.0 150.8 L772.4 148.8 L781.8 147.7 L791.0 147.1 L800.0 146.9 L809.0 147.4 L817.6 149.4 L825.1 153.5 L830.3 159.6 L833.1 166.8 L833.8 174.0 L834.2 179.8 L836.5 183.8 L842.2 186.5 L851.7 189.3 L863.2 193.6Z"/><path d="M891.2 200.0 L897.3 209.9 L895.6 219.7 L886.5 227.6 L872.8 232.4 L858.4 234.5 L846.5 235.7 L838.2 238.3 L832.8 243.7 L828.0 252.0 L821.4 261.4 L811.9 269.4 L800.0 273.4 L787.6 272.3 L776.9 266.4 L769.1 257.4 L764.2 247.7 L761.1 239.0 L758.2 232.2 L754.2 227.0 L749.0 222.7 L743.0 218.1 L737.3 212.9 L732.4 206.8 L728.7 200.0 L726.1 192.5 L724.5 184.4 L724.1 175.8 L725.6 167.0 L729.6 158.5 L736.4 151.1 L745.6 145.4 L756.3 141.7 L767.5 139.7 L778.6 138.5 L789.4 137.8 L800.0 137.6 L810.5 138.4 L820.5 141.1 L828.9 146.3 L834.8 153.6 L837.9 162.0 L839.0 170.0 L840.4 176.2 L844.5 180.2 L852.8 183.2 L865.3 186.5 L879.3 192.0Z"/><path d="M914.6 200.0 L920.1 212.2 L915.8 223.9 L903.1 232.9 L885.9 238.1 L868.8 240.6 L855.4 242.6 L846.5 246.6 L840.7 254.3 L835.0 265.0 L826.7 276.5 L814.6 285.5 L800.0 289.2 L785.2 286.5 L772.7 278.3 L763.9 267.0 L758.4 255.5 L754.5 245.6 L750.3 238.2 L744.7 232.7 L737.4 227.8 L729.4 222.5 L721.9 216.1 L715.6 208.5 L711.0 200.0 L707.7 190.7 L705.8 180.6 L705.6 169.9 L708.0 159.1 L713.5 148.9 L722.4 140.3 L734.1 133.9 L747.3 129.8 L761.0 127.6 L774.3 126.3 L787.3 125.5 L800.0 125.3 L812.6 126.5 L824.3 130.1 L834.1 136.7 L840.8 145.6 L844.4 155.5 L846.3 164.4 L849.2 170.9 L855.9 175.2 L867.8 178.4 L884.1 182.7 L901.2 189.7Z"/><path d="M935.7 200.0 L939.6 214.1 L932.2 227.2 L916.0 236.9 L895.7 242.5 L876.8 245.3 L862.7 248.2 L853.9 254.0 L848.0 264.0 L841.5 277.1 L831.4 290.2 L817.0 299.5 L800.0 302.2 L783.3 297.6 L769.6 287.2 L760.2 274.0 L754.1 261.2 L749.4 250.8 L743.8 243.2 L736.2 237.7 L726.8 232.5 L716.8 226.5 L707.6 219.1 L700.1 210.1 L694.6 200.0 L690.8 188.9 L688.8 177.1 L689.1 164.7 L692.5 152.2 L699.7 140.8 L710.7 131.3 L724.6 124.4 L740.1 120.2 L755.8 117.8 L770.9 116.5 L785.5 115.6 L800.0 115.4 L814.2 117.1 L827.3 121.6 L838.1 129.3 L845.4 139.5 L849.6 150.3 L852.6 159.6 L857.4 166.1 L867.1 170.2 L882.7 173.6 L902.4 178.9 L921.9 187.7Z"/></g></svg>
  <div id="sidebar" class="a">
    <div class="a" style="left:14px;top:12px;width:211px;height:32px;border:1px solid #747474;border-radius:4px"></div>
    <svg class="a" style="left:24px;top:24px" width="14" height="13" viewBox="0 0 14 13"><circle cx="5.5" cy="5.5" r="4.3" fill="none" stroke="#747474" stroke-width="1.6"/><line x1="8.6" y1="8.6" x2="12.5" y2="12.3" stroke="#747474" stroke-width="1.7"/></svg>
    <div class="t" style="left:47px;top:22px;font-size:13px">Skills-Based Routing</div>
    <div class="chev" style="left:19px;top:80px"></div>
    <div class="t sb" style="left:38px;top:78px">Feature Settings</div>
    <div class="chev" style="left:35px;top:112px"></div>
    <div class="t sb" style="left:54px;top:110px">Service</div>
    <div class="chev" style="left:51px;top:143px"></div>
    <div class="t sb" style="left:70px;top:141px;letter-spacing:0">Omni-Channel</div>
    <div class="a" style="left:88px;top:170px;width:116px;height:17px;background:#f9e3b6"></div>
    <div class="t sb" style="left:88px;top:173px">Skills-Based Routing</div>
    <div class="t sb" style="left:88px;top:192px">Rules</div>
    <div class="t sb" style="left:12px;top:246px;letter-spacing:0.1px">Didn't find what you're looking for? Try</div>
    <div class="t sb" style="left:12px;top:265px;letter-spacing:0">using Global Search.</div>
  </div>
  <div class="a card" style="left:262px;top:102px;width:1124px;height:89px"></div>
  <div class="a" style="left:279px;top:118px;width:52px;height:51px;background:#175b9e;border-radius:4px"></div>
  <div class="a card" style="left:262px;top:203px;width:1124px;height:598px"></div>
  <div class="t" style="left:279px;top:223.5px;font-size:18px;font-weight:700">S</div>
  <div class="t" style="left:279px;top:259.5px;font-size:13px">1</div>
  <div class="a" style="left:1256px;top:220px;width:44px;height:32px;border:1px solid #747474;border-radius:4px;background:#fff"></div>
  <svg class="a" style="left:1265px;top:230px" width="14" height="14" viewBox="0 0 20 20"><g fill="#747474"><circle cx="10" cy="10" r="6.8"/><rect x="8.2" y=".6" width="3.6" height="4.6" rx="1.4"/><rect x="8.2" y=".6" width="3.6" height="4.6" rx="1.4" transform="rotate(60 10 10)"/><rect x="8.2" y=".6" width="3.6" height="4.6" rx="1.4" transform="rotate(120 10 10)"/><rect x="8.2" y=".6" width="3.6" height="4.6" rx="1.4" transform="rotate(180 10 10)"/><rect x="8.2" y=".6" width="3.6" height="4.6" rx="1.4" transform="rotate(240 10 10)"/><rect x="8.2" y=".6" width="3.6" height="4.6" rx="1.4" transform="rotate(300 10 10)"/></g><circle cx="10" cy="10" r="4.2" fill="#fff"/><circle cx="10" cy="10" r="2" fill="#747474"/></svg>
  <svg class="a" style="left:1284px;top:235px" width="7" height="5" viewBox="0 0 7 5"><path fill="#747474" d="M0 0h7L3.5 4.2z"/></svg>
  <div class="a" style="left:1308px;top:220px;width:61px;height:32px;border:1px solid #747474;border-radius:4px;background:#fff"></div>
  <div class="t" style="left:1325px;top:230px;font-size:13px;color:#0176d3">New</div>
  <div class="a" style="left:263px;top:286px;width:1122px;height:34px;border-top:1px solid #c9c9c9;border-bottom:1px solid #c9c9c9"></div>
  <div class="a" style="left:1171px;top:286px;width:1px;height:33px;background:#c9c9c9"></div>
  <div class="a" style="left:1332px;top:286px;width:1px;height:33px;background:#c9c9c9"></div>
  <svg class="a" style="left:1152px;top:299px" width="13" height="9" viewBox="0 0 13 9"><path d="M1 1.5l5.5 5.8 5.5-5.8" fill="none" stroke="#747474" stroke-width="1.4"/></svg>
  <svg class="a" style="left:1313px;top:299px" width="13" height="9" viewBox="0 0 13 9"><path d="M1 1.5l5.5 5.8 5.5-5.8" fill="none" stroke="#747474" stroke-width="1.4"/></svg>
  <div class="t" style="left:1180px;top:297px;font-size:13px;font-weight:700;letter-spacing:-0.2px;color:#3e3e3c">Is Active</div>
  <div class="a" style="left:1180.5px;top:329px;width:16px;height:16px;border:1px solid #c9c9c9;border-radius:3px;background:#fff"></div>
  <svg class="a" style="left:1180px;top:329px" width="17" height="16" viewBox="0 0 17 16"><path d="M5 8.3l2.6 2.5 5-5" fill="none" stroke="#747474" stroke-width="1.7"/></svg>
  <div class="a" style="left:1341px;top:325px;width:20px;height:20px;border:1px solid #747474;border-radius:4px;background:#fff"></div>
  <svg class="a" style="left:1347px;top:334px" width="9" height="6" viewBox="0 0 9 6"><path fill="#747474" d="M0 .3h9L4.5 5.8z"/></svg>
  <div class="a" style="left:263px;top:349px;width:1122px;height:1px;background:#c9c9c9"></div>
</div>
<div id="overlay" class="a"></div>
<div id="modal" class="a"></div>
<div class="a" style="left:283px;top:133px;width:833px;height:2px;background:#c9c9c9"></div>
<div class="t" style="left:645px;top:68.5px;font-size:19px;letter-spacing:-0.1px;color:#181818">Select Fields</div>
<div class="t" style="left:600px;top:101px;font-size:13px;letter-spacing:-0.1px;color:#181818">Select fields for routing your Cases</div>
<div class="a" style="left:299px;top:151px;width:801px;height:108px;background:#f3f3f3"></div>
<div class="a" style="left:323px;top:159px;width:753px;height:31.5px;background:#fff;border:1px solid #c9c9c9;border-radius:4px"></div>
<svg class="a" style="left:331px;top:169px" width="14" height="14" viewBox="0 0 14 14"><circle cx="5.9" cy="5.9" r="4.6" fill="none" stroke="#747474" stroke-width="1.6"/><line x1="9.2" y1="9.2" x2="13" y2="13" stroke="#747474" stroke-width="1.7"/></svg>
<div class="t" style="left:355.5px;top:169px;font-size:13px;letter-spacing:-0.5px;color:#747474">Search Fields...</div>
<div class="a" style="left:323px;top:191px;width:753px;height:36px;background:#fff;border:1px solid #747474;border-radius:4px"></div>
<div class="a" style="left:326px;top:198px;width:99px;height:26px;background:#fff;border:1px solid #747474;border-radius:4px"></div>
<div class="t" style="left:329px;top:205px;font-size:13px;letter-spacing:-0.7px;color:#181818">Case Reason</div>
<svg class="a" style="left:406px;top:206px" width="12" height="11" viewBox="0 0 12 11"><path d="M1.5 .8l9 9.2M10.5 .8l-9 9.2" stroke="#555" stroke-width="1.3"/></svg>
<div class="t" style="left:323.5px;top:236.6px;font-size:12px;letter-spacing:-0.1px;color:#2b2b2b">1 of 10 fields selected</div>
<div class="a" style="left:299px;top:258px;width:786px;height:34px;background:#f3f3f3;border-top:1px solid #c9c9c9;border-bottom:1px solid #c9c9c9"></div>
<div class="t" style="left:367px;top:270px;font-size:12.5px;font-weight:700;letter-spacing:1.1px;color:#3e3e3c;transform:scaleX(0.86);transform-origin:0 0">FIELD LABEL</div>
<svg class="a" style="left:457px;top:270px" width="9" height="11" viewBox="0 0 9 11"><path d="M4.5 1v10M.8 4.6L4.5 1l3.7 3.6" fill="none" stroke="#747474" stroke-width="1.6"/></svg>
<div class="t" style="left:730px;top:270px;font-size:12.5px;font-weight:700;letter-spacing:1.8px;color:#3e3e3c;transform:scaleX(0.86);transform-origin:0 0">DATA TYPE</div>
<div class="a" style="left:1085px;top:258px;width:15px;height:401px;background:#fafafa"></div>
<svg class="a" style="left:1087px;top:263px" width="11" height="7" viewBox="0 0 11 7"><path d="M5.5 0L11 7H0z" fill="#8a8a8a"/></svg>
<div class="a" style="left:1088px;top:276px;width:9px;height:155px;background:#8a8a8a;border-radius:4.5px"></div>
<svg class="a" style="left:1087px;top:648px" width="11" height="7" viewBox="0 0 11 7"><path d="M0 0h11L5.5 7z" fill="#8a8a8a"/></svg>
<div class="a pbtn" style="top:296px"></div>
<div class="a" style="left:328px;top:311px;width:14px;height:2px;background:#0176d3"></div>
<div class="a" style="left:334px;top:305px;width:2px;height:14px;background:#0176d3"></div>
<div class="t rt" style="left:367px;top:308.5px">Account</div>
<div class="t rt" style="left:730px;top:308.5px">Reference</div>
<div class="a" style="left:299px;top:336px;width:786px;height:1px;background:#c9c9c9"></div>
<div class="a pbtn" style="top:341px"></div>
<div class="a" style="left:328px;top:356px;width:14px;height:2px;background:#0176d3"></div>
<div class="a" style="left:334px;top:350px;width:2px;height:14px;background:#0176d3"></div>
<div class="t rt" style="left:367px;top:353.5px">Asset</div>
<div class="t rt" style="left:730px;top:353.5px">Reference</div>
<div class="a" style="left:299px;top:382px;width:786px;height:1px;background:#c9c9c9"></div>
<div class="a pbtn" style="top:387px"></div>
<div class="a" style="left:328px;top:402px;width:14px;height:2px;background:#0176d3"></div>
<div class="a" style="left:334px;top:396px;width:2px;height:14px;background:#0176d3"></div>
<div class="t rt" style="left:367px;top:399.5px">Case Origin</div>
<div class="t rt" style="left:730px;top:399.5px">Picklist</div>
<div class="a" style="left:299px;top:427px;width:786px;height:1px;background:#c9c9c9"></div>
<div class="a" style="left:319px;top:432px;width:32px;height:32px;background:#014486;border-radius:4px"></div>
<svg class="a" style="left:319px;top:432px" width="32" height="32" viewBox="0 0 32 32"><path d="M7 16.4l6.6 5.9L23.7 9.5" fill="none" stroke="#fff" stroke-width="2"/></svg>
<div class="t rt" style="left:367px;top:444.5px">Case Reason</div>
<div class="t rt" style="left:730px;top:444.5px">Picklist</div>
<div class="a" style="left:299px;top:473px;width:786px;height:1px;background:#c9c9c9"></div>
<div class="a pbtn" style="top:478px"></div>
<div class="a" style="left:328px;top:493px;width:14px;height:2px;background:#0176d3"></div>
<div class="a" style="left:334px;top:487px;width:2px;height:14px;background:#0176d3"></div>
<div class="t rt" style="left:367px;top:490.5px">Case Type</div>
<div class="t rt" style="left:730px;top:490.5px">Picklist</div>
<div class="a" style="left:299px;top:518px;width:786px;height:1px;background:#c9c9c9"></div>
<div class="a pbtn" style="top:523px"></div>
<div class="a" style="left:328px;top:538px;width:14px;height:2px;background:#0176d3"></div>
<div class="a" style="left:334px;top:532px;width:2px;height:14px;background:#0176d3"></div>
<div class="t rt" style="left:367px;top:535.5px">Clone Source</div>
<div class="t rt" style="left:730px;top:535.5px">Reference</div>
<div class="a" style="left:299px;top:564px;width:786px;height:1px;background:#c9c9c9"></div>
<div class="a pbtn" style="top:569px"></div>
<div class="a" style="left:328px;top:584px;width:14px;height:2px;background:#0176d3"></div>
<div class="a" style="left:334px;top:578px;width:2px;height:14px;background:#0176d3"></div>
<div class="t rt" style="left:367px;top:581.5px">Closed</div>
<div class="t rt" style="left:730px;top:581.5px">Boolean</div>
<div class="a" style="left:299px;top:609px;width:786px;height:1px;background:#c9c9c9"></div>
<div class="a pbtn" style="top:614px"></div>
<div class="a" style="left:328px;top:629px;width:14px;height:2px;background:#0176d3"></div>
<div class="a" style="left:334px;top:623px;width:2px;height:14px;background:#0176d3"></div>
<div class="t rt" style="left:367px;top:626.5px">Contact</div>
<div class="t rt" style="left:730px;top:626.5px">Reference</div>
<div class="a" style="left:299px;top:655px;width:786px;height:1px;background:#c9c9c9"></div>
<div class="a" style="left:283px;top:675px;width:833px;height:58px;background:#f3f3f3;border-top:2px solid #c9c9c9;border-radius:0 0 4px 4px"></div>
<div class="a" style="left:297px;top:687px;width:86px;height:36px;border:2px solid #0b5cab;border-radius:6px;background:#f3f3f3"></div>
<div class="a" style="left:299px;top:689px;width:82px;height:32px;border:1px solid #7a7a7a;border-radius:4px;background:#f7f7f7"></div>
<div class="t" style="left:315.5px;top:699px;font-size:13px;letter-spacing:-0.3px;color:#2d62ad">Previous</div>
<div class="a" style="left:451px;top:704px;width:251px;height:4px;background:#0176d3"></div>
<div class="a" style="left:725px;top:704px;width:250px;height:4px;background:#747474"></div>
<svg class="a" style="left:433px;top:699px" width="14" height="14" viewBox="0 0 14 14"><circle cx="7" cy="7" r="6.5" fill="#0176d3"/><path d="M4 7.2l2 1.9 4-4" fill="none" stroke="#fff" stroke-width="1.7"/></svg>
<div class="a" style="left:705px;top:697px;width:16px;height:16px;border:4px solid #0176d3;border-radius:50%;background:#f3f3f3"></div>
<div class="a" style="left:978px;top:701px;width:8px;height:8px;border-radius:50%;background:#747474"></div>
<div class="a" style="left:1039px;top:689px;width:61px;height:32px;background:#0176d3;border-radius:4px"></div>
<div class="t" style="left:1056px;top:699px;font-size:13px;color:#fff">Next</div>
<div id="closebtn" class="a"></div>
<svg class="a" style="left:1084px;top:8px" width="32" height="32" viewBox="0 0 32 32"><path d="M8.8 9.8l14.5 14.5M23.3 9.8L8.8 24.3" stroke="#707070" stroke-width="2.2" stroke-linecap="round"/></svg>
</body></html>
